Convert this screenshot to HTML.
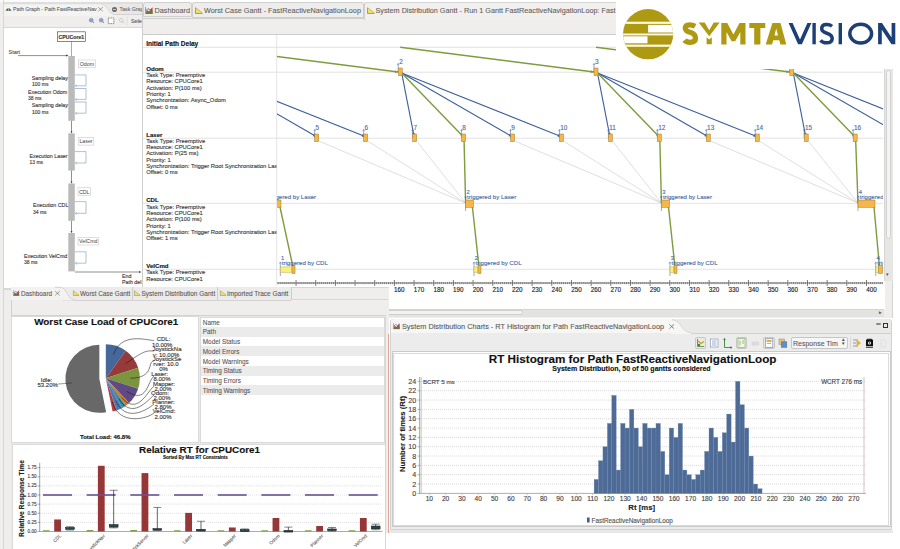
<!DOCTYPE html><html><head><meta charset="utf-8"><style>
html,body{margin:0;padding:0;width:900px;height:549px;overflow:hidden;background:#fff;font-family:"Liberation Sans", sans-serif;}
.a{position:absolute;}
.t{position:absolute;white-space:nowrap;line-height:1;-webkit-text-stroke:0.08px currentColor;}
text{paint-order:stroke;}
svg{position:absolute;overflow:visible;}
</style></head><body>
<div class="a" style="left:0;top:0;width:143px;height:292px;background:#efeeec"></div><div class="a" style="left:0;top:0;width:143px;height:1.5px;background:#fafafa"></div><div class="a" style="left:3px;top:1.5px;width:140px;height:2.5px;background:#dedede"></div><div class="a" style="left:2.5px;top:0;width:1.5px;height:292px;background:#d6d6d6"></div><div class="a" style="left:4px;top:4px;width:139px;height:9.8px;background:#e9e8e6;border-bottom:0.8px solid #d2d2d2"></div><svg style="left:4px;top:3.5px" width="112" height="12"><path d="M0 0.5 H97.5 Q100.5 0.5 103 4 L106.5 9 Q108.5 10.8 112 10.8 V12 H0Z" fill="#f4f3f1"/><path d="M97.5 0.5 Q100.5 0.5 103 4 L106.5 9 Q108.5 10.8 112 10.8" fill="none" stroke="#d2d2d2" stroke-width="0.7"/></svg><svg style="left:5px;top:7.3px" width="7" height="4"><path d="M0.5 3.7 Q3.5 -1.5 6.5 3.7 Z" fill="#555"/><path d="M3.5 0.8 V3.7" stroke="#ddd" stroke-width="0.6"/></svg><div class="t" style="left:13px;top:7.2px;font-size:5.25px;color:#5a5a5a">Path Graph - Path FastReactiveNav</div><svg style="left:98px;top:7.4px" width="5" height="4.5"><path d="M0.5 0.5 L4.5 4 M4.5 0.5 L0.5 4" stroke="#555" stroke-width="0.9" stroke-dasharray="1 0.5"/></svg><div class="a" style="left:112px;top:6.6px;width:5.4px;height:5px;border-radius:50%;background:#666"></div><div class="a" style="left:113.2px;top:8.8px;width:3px;height:0.6px;background:#ccc"></div><div class="t" style="left:119.5px;top:7.2px;font-size:5.25px;color:#666">Task Grap</div><svg style="left:0;top:0" width="143" height="27"><circle cx="91.2" cy="20.2" r="1.9" fill="#8aa8d8" stroke="#7a8a9a" stroke-width="0.6"/><path d="M92.6 21.6 L94 23" stroke="#666" stroke-width="0.8"/><circle cx="101.2" cy="20.2" r="1.9" fill="#8aa8d8" stroke="#7a8a9a" stroke-width="0.6"/><path d="M102.6 21.6 L104 23" stroke="#666" stroke-width="0.8"/><rect x="108.3" y="18" width="5.6" height="5.6" fill="#fff" stroke="#777" stroke-width="0.9" stroke-dasharray="1.4 0.8"/><circle cx="121.2" cy="20.2" r="1.8" fill="none" stroke="#bbb" stroke-width="0.6"/><path d="M122.5 21.5 L123.8 22.8" stroke="#999" stroke-width="0.7"/><line x1="127.2" y1="16.5" x2="127.2" y2="25.5" stroke="#d6d6d6" stroke-width="0.6"/></svg><div class="t" style="left:131px;top:19px;font-size:5.25px;color:#555">Selec</div><div class="a" style="left:4px;top:27px;width:139px;height:260px;background:#fff;border-top:1px solid #d8d8d8"></div><div class="a" style="left:4px;top:288px;width:139px;height:1.5px;background:#d8d8d8"></div><div class="a" style="left:142.5px;top:27px;width:0.8px;height:262px;background:#cfcfcf"></div><svg style="left:0;top:0" width="143" height="290" viewBox="0 0 143 290"><rect x="57.5" y="31.8" width="27.8" height="9.6" fill="#fff" stroke="#555" stroke-width="0.7"/><line x1="71.5" y1="41.4" x2="71.5" y2="56" stroke="#555" stroke-width="0.5"/><line x1="18" y1="55.6" x2="67.5" y2="55.6" stroke="#444" stroke-width="0.6"/><path d="M66 54.6 L68.5 55.6 L66 56.6Z" fill="#444"/><rect x="68.3" y="56" width="6.5" height="64.8" fill="#bababa"/><rect x="68.3" y="133.3" width="6.5" height="37.29999999999998" fill="#bababa"/><rect x="68.3" y="183.5" width="6.5" height="37.30000000000001" fill="#bababa"/><rect x="68.3" y="233" width="6.5" height="38.39999999999998" fill="#bababa"/><line x1="71.5" y1="120.8" x2="71.5" y2="132.8" stroke="#444" stroke-width="0.6"/><path d="M70.5 131.3 L71.5 133.3 L72.5 131.3Z" fill="#444"/><line x1="71.5" y1="170.6" x2="71.5" y2="183.0" stroke="#444" stroke-width="0.6"/><path d="M70.5 181.5 L71.5 183.5 L72.5 181.5Z" fill="#444"/><line x1="71.5" y1="220.8" x2="71.5" y2="232.5" stroke="#444" stroke-width="0.6"/><path d="M70.5 231 L71.5 233 L72.5 231Z" fill="#444"/><rect x="78.3" y="60" width="17.3" height="7.6" fill="#fff" stroke="#c8c8c8" stroke-width="0.6"/><text x="86.95" y="65.8" font-size="5.3" fill="#444" text-anchor="middle" font-family="Liberation Sans">Odom</text><rect x="78.2" y="137.5" width="15.6" height="7.6" fill="#fff" stroke="#c8c8c8" stroke-width="0.6"/><text x="86.0" y="143.3" font-size="5.3" fill="#444" text-anchor="middle" font-family="Liberation Sans">Laser</text><rect x="78" y="187.7" width="12.5" height="7.6" fill="#fff" stroke="#c8c8c8" stroke-width="0.6"/><text x="84.25" y="193.5" font-size="5.3" fill="#444" text-anchor="middle" font-family="Liberation Sans">CDL</text><rect x="78" y="237.4" width="20.5" height="7.6" fill="#fff" stroke="#c8c8c8" stroke-width="0.6"/><text x="88.25" y="243.20000000000002" font-size="5.3" fill="#444" text-anchor="middle" font-family="Liberation Sans">VelCmd</text><path d="M75 74.9 H86 V85.8 H75.5" fill="none" stroke="#7a96c4" stroke-width="0.6"/><path d="M77 84.6 L75.3 85.8 L77 87.0" fill="none" stroke="#7a96c4" stroke-width="0.5"/><path d="M75 88.5 H86 V99.4 H75.5" fill="none" stroke="#7a96c4" stroke-width="0.6"/><path d="M77 98.2 L75.3 99.4 L77 100.60000000000001" fill="none" stroke="#7a96c4" stroke-width="0.5"/><path d="M75 102 H86 V113.2 H75.5" fill="none" stroke="#7a96c4" stroke-width="0.6"/><path d="M77 112.0 L75.3 113.2 L77 114.4" fill="none" stroke="#7a96c4" stroke-width="0.5"/><path d="M75 151.6 H86 V163 H75.5" fill="none" stroke="#7a96c4" stroke-width="0.6"/><path d="M77 161.8 L75.3 163 L77 164.2" fill="none" stroke="#7a96c4" stroke-width="0.5"/><path d="M75 201.6 H86 V213.3 H75.5" fill="none" stroke="#7a96c4" stroke-width="0.6"/><path d="M77 212.10000000000002 L75.3 213.3 L77 214.5" fill="none" stroke="#7a96c4" stroke-width="0.5"/><path d="M75 251.8 H86 V263.2 H75.5" fill="none" stroke="#7a96c4" stroke-width="0.6"/><path d="M77 262.0 L75.3 263.2 L77 264.4" fill="none" stroke="#7a96c4" stroke-width="0.5"/><text x="71.4" y="38.6" font-size="5.2" fill="#333" stroke="#333" stroke-width="0.13" text-anchor="middle" font-weight="bold" font-family="Liberation Sans">CPUCore1</text><text x="8.5" y="54" font-size="5.5" fill="#555" stroke="#555" stroke-width="0.13" text-anchor="start" font-weight="normal" font-family="Liberation Sans">Start</text><text x="31.7" y="80" font-size="5.3" fill="#3a3a3a" stroke="#3a3a3a" stroke-width="0.13" text-anchor="start" font-weight="normal" font-family="Liberation Sans">Sampling delay</text><text x="32" y="86" font-size="5" fill="#3a3a3a" stroke="#3a3a3a" stroke-width="0.13" text-anchor="start" font-weight="normal" font-family="Liberation Sans">100 ms</text><text x="28" y="93.5" font-size="5.3" fill="#3a3a3a" stroke="#3a3a3a" stroke-width="0.13" text-anchor="start" font-weight="normal" font-family="Liberation Sans">Execution Odom</text><text x="28" y="99.8" font-size="5" fill="#3a3a3a" stroke="#3a3a3a" stroke-width="0.13" text-anchor="start" font-weight="normal" font-family="Liberation Sans">38 ms</text><text x="31.7" y="107" font-size="5.3" fill="#3a3a3a" stroke="#3a3a3a" stroke-width="0.13" text-anchor="start" font-weight="normal" font-family="Liberation Sans">Sampling delay</text><text x="32" y="113.5" font-size="5" fill="#3a3a3a" stroke="#3a3a3a" stroke-width="0.13" text-anchor="start" font-weight="normal" font-family="Liberation Sans">100 ms</text><text x="29.5" y="157.5" font-size="5.3" fill="#3a3a3a" stroke="#3a3a3a" stroke-width="0.13" text-anchor="start" font-weight="normal" font-family="Liberation Sans">Execution Laser</text><text x="29.5" y="163.5" font-size="5" fill="#3a3a3a" stroke="#3a3a3a" stroke-width="0.13" text-anchor="start" font-weight="normal" font-family="Liberation Sans">13 ms</text><text x="33" y="207" font-size="5.3" fill="#3a3a3a" stroke="#3a3a3a" stroke-width="0.13" text-anchor="start" font-weight="normal" font-family="Liberation Sans">Execution CDL</text><text x="33" y="213.5" font-size="5" fill="#3a3a3a" stroke="#3a3a3a" stroke-width="0.13" text-anchor="start" font-weight="normal" font-family="Liberation Sans">34 ms</text><text x="24" y="257.5" font-size="5.3" fill="#3a3a3a" stroke="#3a3a3a" stroke-width="0.13" text-anchor="start" font-weight="normal" font-family="Liberation Sans">Execution VelCmd</text><text x="24" y="263.5" font-size="5" fill="#3a3a3a" stroke="#3a3a3a" stroke-width="0.13" text-anchor="start" font-weight="normal" font-family="Liberation Sans">38 ms</text><line x1="75" y1="272" x2="140" y2="272" stroke="#444" stroke-width="0.6"/><path d="M139 271 L141.5 272 L139 273Z" fill="#444"/><text x="122" y="277.6" font-size="5.3" fill="#3a3a3a" stroke="#3a3a3a" stroke-width="0.13" text-anchor="start" font-weight="normal" font-family="Liberation Sans">End</text><text x="122" y="283.8" font-size="5.3" fill="#3a3a3a" stroke="#3a3a3a" stroke-width="0.13" text-anchor="start" font-weight="normal" font-family="Liberation Sans">Path del</text></svg><div class="a" style="left:142px;top:2px;width:751px;height:316px;background:#efeeec;border-radius:4px 0 0 0"></div><div class="a" style="left:142px;top:2px;width:0.8px;height:316px;background:#cfcfcf"></div><div class="a" style="left:892px;top:68px;width:0.8px;height:250px;background:#d4d4d4"></div><div class="a" style="left:143px;top:2.4px;width:49px;height:15px;background:#eeedeb;border:0.8px solid #cfcfcf;border-radius:3px 3px 0 0;box-sizing:border-box"></div><div class="a" style="left:192.4px;top:2.4px;width:172px;height:15.6px;background:#eeedeb;border:0.8px solid #cfcfcf;border-radius:3px 3px 0 0;box-sizing:border-box"></div><div class="a" style="left:364px;top:2.4px;width:260px;height:16.6px;background:#f1f0ee;border-left:0.8px solid #cfcfcf;border-top:0.8px solid #d6d6d6;border-radius:3px 0 0 0"></div><div class="a" style="left:143px;top:17.8px;width:221px;height:0.8px;background:#cfcfcf"></div><svg style="left:145px;top:7px" width="8" height="7" viewBox="0 0 8 7"><path d="M0.5 6.5 L2 3 L4 4.5 L7.5 0.5 V6.5Z" fill="#d33"/><path d="M0.5 6.5 L2.5 4.5 L4.5 5.5 L7.5 3 V6.5Z" fill="#4a8a3a"/><path d="M0.5 4 L3 1.5 L5 3 L7.5 1" stroke="#3a5fb0" stroke-width="0.8" fill="none"/><path d="M0.5 0 V6.5 H8" stroke="#555" stroke-width="0.5" fill="none"/></svg><div class="t" style="left:154.5px;top:7.2px;font-size:7.26px;color:#5c5c5c">Dashboard</div><svg style="left:195px;top:6.5px" width="8" height="7" viewBox="0 0 8 7"><path d="M0.5 0.5 V6.5 H7.5" stroke="#777" stroke-width="0.7" fill="none"/><path d="M1 1 L7.5 6 H1Z" fill="#e8e070"/><path d="M1 1 L7.5 6" stroke="#c8a030" stroke-width="0.7"/></svg><div class="t" style="left:204px;top:7.2px;font-size:7.28px;color:#5c5c5c">Worst Case Gantt - FastReactiveNavigationLoop</div><svg style="left:366.5px;top:6.5px" width="8" height="7" viewBox="0 0 8 7"><path d="M0.5 0.5 V6.5 H7.5" stroke="#777" stroke-width="0.7" fill="none"/><path d="M1 1 L7.5 6 H1Z" fill="#e8e070"/><path d="M1 1 L7.5 6" stroke="#c8a030" stroke-width="0.7"/></svg><div class="t" style="left:375.5px;top:7.2px;font-size:7.24px;color:#5c5c5c">System Distribution Gantt - Run 1 Gantt FastReactiveNavigationLoop: Fast</div><div class="a" style="left:143px;top:34.4px;width:742px;height:275px;background:#fff;border-top:0.8px solid #cdcdcd"></div><svg style="left:0;top:0" width="900" height="320" viewBox="0 0 900 320"><defs><clipPath id="gc"><rect x="277" y="35" width="606" height="252"/></clipPath><clipPath id="tc"><rect x="143" y="35" width="133.5" height="252"/></clipPath></defs><line x1="143" y1="47.3" x2="883" y2="47.3" stroke="#dcdcdc" stroke-width="0.8"/><line x1="143" y1="72.2" x2="883" y2="72.2" stroke="#dcdcdc" stroke-width="0.8"/><line x1="143" y1="138.2" x2="883" y2="138.2" stroke="#dcdcdc" stroke-width="0.8"/><line x1="143" y1="203.4" x2="883" y2="203.4" stroke="#dcdcdc" stroke-width="0.8"/><line x1="143" y1="269.3" x2="883" y2="269.3" stroke="#dcdcdc" stroke-width="0.8"/><line x1="276.7" y1="35" x2="276.7" y2="286" stroke="#dcdcdc" stroke-width="0.8"/><g clip-path="url(#tc)"><text x="146.2" y="46" font-size="6.5" fill="#111" stroke="#111" stroke-width="0.13" font-weight="bold" text-anchor="start" font-family="Liberation Sans" >Initial Path Delay</text><text x="146.2" y="70.8" font-size="6.1" fill="#111" stroke="#111" stroke-width="0.13" font-weight="bold" text-anchor="start" font-family="Liberation Sans" >Odom</text><text x="146.2" y="77.1" font-size="5.85" fill="#3a3a3a" stroke="#3a3a3a" stroke-width="0.13" font-weight="normal" text-anchor="start" font-family="Liberation Sans" >Task Type: Preemptive</text><text x="146.2" y="83.39999999999999" font-size="5.85" fill="#3a3a3a" stroke="#3a3a3a" stroke-width="0.13" font-weight="normal" text-anchor="start" font-family="Liberation Sans" >Resource: CPUCore1</text><text x="146.2" y="89.69999999999999" font-size="5.85" fill="#3a3a3a" stroke="#3a3a3a" stroke-width="0.13" font-weight="normal" text-anchor="start" font-family="Liberation Sans" >Activation: P(100 ms)</text><text x="146.2" y="96.0" font-size="5.85" fill="#3a3a3a" stroke="#3a3a3a" stroke-width="0.13" font-weight="normal" text-anchor="start" font-family="Liberation Sans" >Priority: 1</text><text x="146.2" y="102.3" font-size="5.85" fill="#3a3a3a" stroke="#3a3a3a" stroke-width="0.13" font-weight="normal" text-anchor="start" font-family="Liberation Sans" >Synchronization: Async_Odom</text><text x="146.2" y="108.6" font-size="5.85" fill="#3a3a3a" stroke="#3a3a3a" stroke-width="0.13" font-weight="normal" text-anchor="start" font-family="Liberation Sans" >Offset: 0 ms</text><text x="146.2" y="136.6" font-size="6.1" fill="#111" stroke="#111" stroke-width="0.13" font-weight="bold" text-anchor="start" font-family="Liberation Sans" >Laser</text><text x="146.2" y="142.7" font-size="5.85" fill="#3a3a3a" stroke="#3a3a3a" stroke-width="0.13" font-weight="normal" text-anchor="start" font-family="Liberation Sans" >Task Type: Preemptive</text><text x="146.2" y="149.0" font-size="5.85" fill="#3a3a3a" stroke="#3a3a3a" stroke-width="0.13" font-weight="normal" text-anchor="start" font-family="Liberation Sans" >Resource: CPUCore1</text><text x="146.2" y="155.29999999999998" font-size="5.85" fill="#3a3a3a" stroke="#3a3a3a" stroke-width="0.13" font-weight="normal" text-anchor="start" font-family="Liberation Sans" >Activation: P(25 ms)</text><text x="146.2" y="161.6" font-size="5.85" fill="#3a3a3a" stroke="#3a3a3a" stroke-width="0.13" font-weight="normal" text-anchor="start" font-family="Liberation Sans" >Priority: 1</text><text x="146.2" y="167.89999999999998" font-size="5.85" fill="#3a3a3a" stroke="#3a3a3a" stroke-width="0.13" font-weight="normal" text-anchor="start" font-family="Liberation Sans" >Synchronization: Trigger Root Synchronization Laser</text><text x="146.2" y="174.2" font-size="5.85" fill="#3a3a3a" stroke="#3a3a3a" stroke-width="0.13" font-weight="normal" text-anchor="start" font-family="Liberation Sans" >Offset: 0 ms</text><text x="146.2" y="202" font-size="6.1" fill="#111" stroke="#111" stroke-width="0.13" font-weight="bold" text-anchor="start" font-family="Liberation Sans" >CDL</text><text x="146.2" y="208.8" font-size="5.85" fill="#3a3a3a" stroke="#3a3a3a" stroke-width="0.13" font-weight="normal" text-anchor="start" font-family="Liberation Sans" >Task Type: Preemptive</text><text x="146.2" y="215.10000000000002" font-size="5.85" fill="#3a3a3a" stroke="#3a3a3a" stroke-width="0.13" font-weight="normal" text-anchor="start" font-family="Liberation Sans" >Resource: CPUCore1</text><text x="146.2" y="221.4" font-size="5.85" fill="#3a3a3a" stroke="#3a3a3a" stroke-width="0.13" font-weight="normal" text-anchor="start" font-family="Liberation Sans" >Activation: P(100 ms)</text><text x="146.2" y="227.70000000000002" font-size="5.85" fill="#3a3a3a" stroke="#3a3a3a" stroke-width="0.13" font-weight="normal" text-anchor="start" font-family="Liberation Sans" >Priority: 1</text><text x="146.2" y="234.0" font-size="5.85" fill="#3a3a3a" stroke="#3a3a3a" stroke-width="0.13" font-weight="normal" text-anchor="start" font-family="Liberation Sans" >Synchronization: Trigger Root Synchronization Laser</text><text x="146.2" y="240.3" font-size="5.85" fill="#3a3a3a" stroke="#3a3a3a" stroke-width="0.13" font-weight="normal" text-anchor="start" font-family="Liberation Sans" >Offset: 1 ms</text><text x="146.2" y="268" font-size="6.1" fill="#111" stroke="#111" stroke-width="0.13" font-weight="bold" text-anchor="start" font-family="Liberation Sans" >VelCmd</text><text x="146.2" y="274.4" font-size="5.85" fill="#3a3a3a" stroke="#3a3a3a" stroke-width="0.13" font-weight="normal" text-anchor="start" font-family="Liberation Sans" >Task Type: Preemptive</text><text x="146.2" y="280.7" font-size="5.85" fill="#3a3a3a" stroke="#3a3a3a" stroke-width="0.13" font-weight="normal" text-anchor="start" font-family="Liberation Sans" >Resource: CPUCore1</text><text x="146.2" y="291.3" font-size="5.85" fill="#c33" stroke="#c33" stroke-width="0.13" font-weight="normal" text-anchor="start" font-family="Liberation Sans" >Activation: P(100 ms)</text></g><g clip-path="url(#gc)"><line x1="318.7" y1="141" x2="465.6" y2="203" stroke="#c4c4c4" stroke-width="0.55"/><line x1="367.65" y1="141" x2="465.6" y2="203" stroke="#c4c4c4" stroke-width="0.55"/><line x1="416.6" y1="141" x2="465.6" y2="203" stroke="#c4c4c4" stroke-width="0.55"/><line x1="514.5" y1="141" x2="661.4" y2="203" stroke="#c4c4c4" stroke-width="0.55"/><line x1="563.45" y1="141" x2="661.4" y2="203" stroke="#c4c4c4" stroke-width="0.55"/><line x1="612.4000000000001" y1="141" x2="661.4" y2="203" stroke="#c4c4c4" stroke-width="0.55"/><line x1="710.3" y1="141" x2="858" y2="203" stroke="#c4c4c4" stroke-width="0.55"/><line x1="759.25" y1="141" x2="858" y2="203" stroke="#c4c4c4" stroke-width="0.55"/><line x1="808.2" y1="141" x2="858" y2="203" stroke="#c4c4c4" stroke-width="0.55"/><line x1="8.599999999999994" y1="47.3" x2="202.4" y2="72" stroke="#7d9c3c" stroke-width="1.4"/><path d="M202.4 72 L199.04362087251133 73.02387457852923 L199.4077343244503 70.16698441716197Z" fill="#7d9c3c"/><line x1="204.39999999999998" y1="47.3" x2="398.2" y2="72" stroke="#7d9c3c" stroke-width="1.4"/><path d="M398.2 72 L394.84362087251134 73.02387457852923 L395.20773432445026 70.16698441716197Z" fill="#7d9c3c"/><line x1="400.2" y1="47.3" x2="594" y2="72" stroke="#7d9c3c" stroke-width="1.4"/><path d="M594 72 L590.6436208725114 73.02387457852923 L591.0077343244503 70.16698441716197Z" fill="#7d9c3c"/><line x1="596.0" y1="47.3" x2="789.8" y2="72" stroke="#7d9c3c" stroke-width="1.4"/><path d="M789.8 72 L786.4436208725114 73.02387457852923 L786.8077343244503 70.16698441716197Z" fill="#7d9c3c"/><line x1="205.9" y1="73" x2="218.29999999999998" y2="136.5" stroke="#3d5f99" stroke-width="1.15"/><path d="M218.29999999999998 136.5 L216.2733963998549 133.6353049293373 L219.1000076444746 133.08333674928562Z" fill="#3d5f99"/><line x1="205.9" y1="73" x2="316.2" y2="136.5" stroke="#3d5f99" stroke-width="1.15"/><path d="M316.2 136.5 L312.7082849482461 136.15139420923444 L314.1451995492019 133.655462233086Z" fill="#3d5f99"/><line x1="205.9" y1="73" x2="365.15" y2="136.5" stroke="#3d5f99" stroke-width="1.15"/><path d="M365.15 136.5 L361.64423497743775 136.65235355781533 L362.71094319540356 133.97718373559394Z" fill="#3d5f99"/><line x1="205.9" y1="73" x2="267.75" y2="137" stroke="#7d9c3c" stroke-width="1.4"/><path d="M267.75 137 L264.4907610787831 135.6996301855145 L266.56171708388064 133.6982453587132Z" fill="#7d9c3c"/><line x1="401.7" y1="73" x2="414.1" y2="136.5" stroke="#3d5f99" stroke-width="1.15"/><path d="M414.1 136.5 L412.0733963998549 133.63530492933734 L414.9000076444746 133.0833367492856Z" fill="#3d5f99"/><line x1="401.7" y1="73" x2="512.0" y2="136.5" stroke="#3d5f99" stroke-width="1.15"/><path d="M512.0 136.5 L508.5082849482461 136.15139420923444 L509.9451995492019 133.655462233086Z" fill="#3d5f99"/><line x1="401.7" y1="73" x2="560.95" y2="136.5" stroke="#3d5f99" stroke-width="1.15"/><path d="M560.95 136.5 L557.4442349774378 136.65235355781533 L558.5109431954037 133.97718373559394Z" fill="#3d5f99"/><line x1="401.7" y1="73" x2="463.55" y2="137" stroke="#7d9c3c" stroke-width="1.4"/><path d="M463.55 137 L460.29076107878313 135.6996301855145 L462.36171708388065 133.6982453587132Z" fill="#7d9c3c"/><line x1="597.5" y1="73" x2="609.9000000000001" y2="136.5" stroke="#3d5f99" stroke-width="1.15"/><path d="M609.9000000000001 136.5 L607.873396399855 133.63530492933734 L610.7000076444747 133.0833367492856Z" fill="#3d5f99"/><line x1="597.5" y1="73" x2="707.8" y2="136.5" stroke="#3d5f99" stroke-width="1.15"/><path d="M707.8 136.5 L704.3082849482461 136.15139420923444 L705.7451995492019 133.655462233086Z" fill="#3d5f99"/><line x1="597.5" y1="73" x2="756.75" y2="136.5" stroke="#3d5f99" stroke-width="1.15"/><path d="M756.75 136.5 L753.2442349774377 136.65235355781533 L754.3109431954036 133.97718373559394Z" fill="#3d5f99"/><line x1="597.5" y1="73" x2="659.35" y2="137" stroke="#7d9c3c" stroke-width="1.4"/><path d="M659.35 137 L656.0907610787832 135.6996301855145 L658.1617170838807 133.6982453587132Z" fill="#7d9c3c"/><line x1="793.3" y1="73" x2="805.7" y2="136.5" stroke="#3d5f99" stroke-width="1.15"/><path d="M805.7 136.5 L803.6733963998549 133.63530492933734 L806.5000076444746 133.0833367492856Z" fill="#3d5f99"/><line x1="793.3" y1="73" x2="903.6000000000001" y2="136.5" stroke="#3d5f99" stroke-width="1.15"/><path d="M903.6000000000001 136.5 L900.1082849482463 136.15139420923444 L901.545199549202 133.655462233086Z" fill="#3d5f99"/><line x1="793.3" y1="73" x2="952.55" y2="136.5" stroke="#3d5f99" stroke-width="1.15"/><path d="M952.55 136.5 L949.0442349774377 136.65235355781533 L950.1109431954036 133.97718373559394Z" fill="#3d5f99"/><line x1="793.3" y1="73" x2="855.1500000000001" y2="137" stroke="#7d9c3c" stroke-width="1.4"/><path d="M855.1500000000001 137 L851.8907610787833 135.6996301855145 L853.9617170838808 133.6982453587132Z" fill="#7d9c3c"/><line x1="464.05" y1="140" x2="465.6" y2="203" stroke="#7d9c3c" stroke-width="1.4"/><line x1="659.85" y1="140" x2="661.4" y2="203" stroke="#7d9c3c" stroke-width="1.4"/><line x1="855.6500000000001" y1="140" x2="858" y2="203" stroke="#7d9c3c" stroke-width="1.4"/><line x1="280" y1="207" x2="293" y2="267" stroke="#7d9c3c" stroke-width="1.4"/><line x1="472.4" y1="207" x2="479" y2="267" stroke="#7d9c3c" stroke-width="1.4"/><line x1="668.5" y1="207" x2="675" y2="267" stroke="#7d9c3c" stroke-width="1.4"/><line x1="874" y1="207" x2="879.5" y2="267" stroke="#7d9c3c" stroke-width="1.4"/><line x1="202.4" y1="63.5" x2="202.4" y2="72" stroke="#4a70b0" stroke-width="0.6"/><path d="M201.4 65.1 L202.4 63.5 L203.4 65.1" stroke="#4a70b0" stroke-width="0.5" fill="none"/><text x="203.4" y="64" font-size="6.4" fill="#4a6ea8" stroke="#4a6ea8" stroke-width="0.13" font-weight="normal" text-anchor="start" font-family="Liberation Sans" >1</text><rect x="202.4" y="68" width="4" height="7.6" fill="#f6b64a" stroke="#9a7a30" stroke-width="0.5"/><line x1="398.2" y1="63.5" x2="398.2" y2="72" stroke="#4a70b0" stroke-width="0.6"/><path d="M397.2 65.1 L398.2 63.5 L399.2 65.1" stroke="#4a70b0" stroke-width="0.5" fill="none"/><text x="399.2" y="64" font-size="6.4" fill="#4a6ea8" stroke="#4a6ea8" stroke-width="0.13" font-weight="normal" text-anchor="start" font-family="Liberation Sans" >2</text><rect x="398.2" y="68" width="4" height="7.6" fill="#f6b64a" stroke="#9a7a30" stroke-width="0.5"/><line x1="594" y1="63.5" x2="594" y2="72" stroke="#4a70b0" stroke-width="0.6"/><path d="M593 65.1 L594 63.5 L595 65.1" stroke="#4a70b0" stroke-width="0.5" fill="none"/><text x="595.0" y="64" font-size="6.4" fill="#4a6ea8" stroke="#4a6ea8" stroke-width="0.13" font-weight="normal" text-anchor="start" font-family="Liberation Sans" >3</text><rect x="594" y="68" width="4" height="7.6" fill="#f6b64a" stroke="#9a7a30" stroke-width="0.5"/><line x1="789.8" y1="63.5" x2="789.8" y2="72" stroke="#4a70b0" stroke-width="0.6"/><path d="M788.8 65.1 L789.8 63.5 L790.8 65.1" stroke="#4a70b0" stroke-width="0.5" fill="none"/><text x="790.8" y="64" font-size="6.4" fill="#4a6ea8" stroke="#4a6ea8" stroke-width="0.13" font-weight="normal" text-anchor="start" font-family="Liberation Sans" >4</text><rect x="789.8" y="68" width="4" height="7.6" fill="#f6b64a" stroke="#9a7a30" stroke-width="0.5"/><line x1="314.7" y1="129.5" x2="314.7" y2="138" stroke="#4a70b0" stroke-width="0.6"/><path d="M313.7 131.1 L314.7 129.5 L315.7 131.1" stroke="#4a70b0" stroke-width="0.5" fill="none"/><text x="315.5" y="130" font-size="6.4" fill="#4a6ea8" stroke="#4a6ea8" stroke-width="0.13" font-weight="normal" text-anchor="start" font-family="Liberation Sans" >5</text><rect x="314.7" y="134" width="4" height="7.6" fill="#f6b64a" stroke="#9a7a30" stroke-width="0.5"/><line x1="363.65" y1="129.5" x2="363.65" y2="138" stroke="#4a70b0" stroke-width="0.6"/><path d="M362.65 131.1 L363.65 129.5 L364.65 131.1" stroke="#4a70b0" stroke-width="0.5" fill="none"/><text x="364.45" y="130" font-size="6.4" fill="#4a6ea8" stroke="#4a6ea8" stroke-width="0.13" font-weight="normal" text-anchor="start" font-family="Liberation Sans" >6</text><rect x="363.65" y="134" width="4" height="7.6" fill="#f6b64a" stroke="#9a7a30" stroke-width="0.5"/><line x1="412.6" y1="129.5" x2="412.6" y2="138" stroke="#4a70b0" stroke-width="0.6"/><path d="M411.6 131.1 L412.6 129.5 L413.6 131.1" stroke="#4a70b0" stroke-width="0.5" fill="none"/><text x="413.40000000000003" y="130" font-size="6.4" fill="#4a6ea8" stroke="#4a6ea8" stroke-width="0.13" font-weight="normal" text-anchor="start" font-family="Liberation Sans" >7</text><rect x="412.6" y="134" width="4" height="7.6" fill="#f6b64a" stroke="#9a7a30" stroke-width="0.5"/><line x1="461.55" y1="129.5" x2="461.55" y2="138" stroke="#4a70b0" stroke-width="0.6"/><path d="M460.55 131.1 L461.55 129.5 L462.55 131.1" stroke="#4a70b0" stroke-width="0.5" fill="none"/><text x="462.35" y="130" font-size="6.4" fill="#4a6ea8" stroke="#4a6ea8" stroke-width="0.13" font-weight="normal" text-anchor="start" font-family="Liberation Sans" >8</text><rect x="461.55" y="134" width="4" height="7.6" fill="#f6b64a" stroke="#9a7a30" stroke-width="0.5"/><line x1="510.5" y1="129.5" x2="510.5" y2="138" stroke="#4a70b0" stroke-width="0.6"/><path d="M509.5 131.1 L510.5 129.5 L511.5 131.1" stroke="#4a70b0" stroke-width="0.5" fill="none"/><text x="511.29999999999995" y="130" font-size="6.4" fill="#4a6ea8" stroke="#4a6ea8" stroke-width="0.13" font-weight="normal" text-anchor="start" font-family="Liberation Sans" >9</text><rect x="510.5" y="134" width="4" height="7.6" fill="#f6b64a" stroke="#9a7a30" stroke-width="0.5"/><line x1="559.45" y1="129.5" x2="559.45" y2="138" stroke="#4a70b0" stroke-width="0.6"/><path d="M558.45 131.1 L559.45 129.5 L560.45 131.1" stroke="#4a70b0" stroke-width="0.5" fill="none"/><text x="560.25" y="130" font-size="6.4" fill="#4a6ea8" stroke="#4a6ea8" stroke-width="0.13" font-weight="normal" text-anchor="start" font-family="Liberation Sans" >10</text><rect x="559.45" y="134" width="4" height="7.6" fill="#f6b64a" stroke="#9a7a30" stroke-width="0.5"/><line x1="608.4000000000001" y1="129.5" x2="608.4000000000001" y2="138" stroke="#4a70b0" stroke-width="0.6"/><path d="M607.4000000000001 131.1 L608.4000000000001 129.5 L609.4000000000001 131.1" stroke="#4a70b0" stroke-width="0.5" fill="none"/><text x="609.2" y="130" font-size="6.4" fill="#4a6ea8" stroke="#4a6ea8" stroke-width="0.13" font-weight="normal" text-anchor="start" font-family="Liberation Sans" >11</text><rect x="608.4000000000001" y="134" width="4" height="7.6" fill="#f6b64a" stroke="#9a7a30" stroke-width="0.5"/><line x1="657.35" y1="129.5" x2="657.35" y2="138" stroke="#4a70b0" stroke-width="0.6"/><path d="M656.35 131.1 L657.35 129.5 L658.35 131.1" stroke="#4a70b0" stroke-width="0.5" fill="none"/><text x="658.15" y="130" font-size="6.4" fill="#4a6ea8" stroke="#4a6ea8" stroke-width="0.13" font-weight="normal" text-anchor="start" font-family="Liberation Sans" >12</text><rect x="657.35" y="134" width="4" height="7.6" fill="#f6b64a" stroke="#9a7a30" stroke-width="0.5"/><line x1="706.3" y1="129.5" x2="706.3" y2="138" stroke="#4a70b0" stroke-width="0.6"/><path d="M705.3 131.1 L706.3 129.5 L707.3 131.1" stroke="#4a70b0" stroke-width="0.5" fill="none"/><text x="707.0999999999999" y="130" font-size="6.4" fill="#4a6ea8" stroke="#4a6ea8" stroke-width="0.13" font-weight="normal" text-anchor="start" font-family="Liberation Sans" >13</text><rect x="706.3" y="134" width="4" height="7.6" fill="#f6b64a" stroke="#9a7a30" stroke-width="0.5"/><line x1="755.25" y1="129.5" x2="755.25" y2="138" stroke="#4a70b0" stroke-width="0.6"/><path d="M754.25 131.1 L755.25 129.5 L756.25 131.1" stroke="#4a70b0" stroke-width="0.5" fill="none"/><text x="756.05" y="130" font-size="6.4" fill="#4a6ea8" stroke="#4a6ea8" stroke-width="0.13" font-weight="normal" text-anchor="start" font-family="Liberation Sans" >14</text><rect x="755.25" y="134" width="4" height="7.6" fill="#f6b64a" stroke="#9a7a30" stroke-width="0.5"/><line x1="804.2" y1="129.5" x2="804.2" y2="138" stroke="#4a70b0" stroke-width="0.6"/><path d="M803.2 131.1 L804.2 129.5 L805.2 131.1" stroke="#4a70b0" stroke-width="0.5" fill="none"/><text x="805.0" y="130" font-size="6.4" fill="#4a6ea8" stroke="#4a6ea8" stroke-width="0.13" font-weight="normal" text-anchor="start" font-family="Liberation Sans" >15</text><rect x="804.2" y="134" width="4" height="7.6" fill="#f6b64a" stroke="#9a7a30" stroke-width="0.5"/><line x1="853.1500000000001" y1="129.5" x2="853.1500000000001" y2="138" stroke="#4a70b0" stroke-width="0.6"/><path d="M852.1500000000001 131.1 L853.1500000000001 129.5 L854.1500000000001 131.1" stroke="#4a70b0" stroke-width="0.5" fill="none"/><text x="853.95" y="130" font-size="6.4" fill="#4a6ea8" stroke="#4a6ea8" stroke-width="0.13" font-weight="normal" text-anchor="start" font-family="Liberation Sans" >16</text><rect x="853.1500000000001" y="134" width="4" height="7.6" fill="#f6b64a" stroke="#9a7a30" stroke-width="0.5"/><line x1="902.1000000000001" y1="129.5" x2="902.1000000000001" y2="138" stroke="#4a70b0" stroke-width="0.6"/><path d="M901.1000000000001 131.1 L902.1000000000001 129.5 L903.1000000000001 131.1" stroke="#4a70b0" stroke-width="0.5" fill="none"/><text x="902.9000000000001" y="130" font-size="6.4" fill="#4a6ea8" stroke="#4a6ea8" stroke-width="0.13" font-weight="normal" text-anchor="start" font-family="Liberation Sans" >17</text><rect x="902.1000000000001" y="134" width="4" height="7.6" fill="#f6b64a" stroke="#9a7a30" stroke-width="0.5"/><line x1="951.05" y1="129.5" x2="951.05" y2="138" stroke="#4a70b0" stroke-width="0.6"/><path d="M950.05 131.1 L951.05 129.5 L952.05 131.1" stroke="#4a70b0" stroke-width="0.5" fill="none"/><text x="951.8499999999999" y="130" font-size="6.4" fill="#4a6ea8" stroke="#4a6ea8" stroke-width="0.13" font-weight="normal" text-anchor="start" font-family="Liberation Sans" >18</text><rect x="951.05" y="134" width="4" height="7.6" fill="#f6b64a" stroke="#9a7a30" stroke-width="0.5"/><line x1="262" y1="196" x2="262" y2="211" stroke="#4a70b0" stroke-width="0.6"/><path d="M261 197.6 L262 196 L263 197.6" stroke="#4a70b0" stroke-width="0.5" fill="none"/><rect x="262" y="200" width="19" height="7.3" fill="#f6b64a" stroke="#9a7a30" stroke-width="0.5"/><text x="262.8" y="193.8" font-size="5.8" fill="#4a6ea8" stroke="#4a6ea8" stroke-width="0.13" font-weight="normal" text-anchor="start" font-family="Liberation Sans" >1</text><text x="267" y="199" font-size="6.1" fill="#4a6ea8" stroke="#4a6ea8" stroke-width="0.13" font-weight="normal" text-anchor="start" font-family="Liberation Sans" >triggered by Laser</text><line x1="465.6" y1="196" x2="465.6" y2="211" stroke="#4a70b0" stroke-width="0.6"/><path d="M464.6 197.6 L465.6 196 L466.6 197.6" stroke="#4a70b0" stroke-width="0.5" fill="none"/><rect x="465.6" y="200" width="7.7999999999999545" height="7.3" fill="#f6b64a" stroke="#9a7a30" stroke-width="0.5"/><text x="466.40000000000003" y="193.8" font-size="5.8" fill="#4a6ea8" stroke="#4a6ea8" stroke-width="0.13" font-weight="normal" text-anchor="start" font-family="Liberation Sans" >2</text><text x="467.1" y="199" font-size="6.1" fill="#4a6ea8" stroke="#4a6ea8" stroke-width="0.13" font-weight="normal" text-anchor="start" font-family="Liberation Sans" >triggered by Laser</text><line x1="661.4" y1="196" x2="661.4" y2="211" stroke="#4a70b0" stroke-width="0.6"/><path d="M660.4 197.6 L661.4 196 L662.4 197.6" stroke="#4a70b0" stroke-width="0.5" fill="none"/><rect x="661.4" y="200" width="8.100000000000023" height="7.3" fill="#f6b64a" stroke="#9a7a30" stroke-width="0.5"/><text x="662.1999999999999" y="193.8" font-size="5.8" fill="#4a6ea8" stroke="#4a6ea8" stroke-width="0.13" font-weight="normal" text-anchor="start" font-family="Liberation Sans" >3</text><text x="662.9" y="199" font-size="6.1" fill="#4a6ea8" stroke="#4a6ea8" stroke-width="0.13" font-weight="normal" text-anchor="start" font-family="Liberation Sans" >triggered by Laser</text><line x1="858" y1="196" x2="858" y2="211" stroke="#4a70b0" stroke-width="0.6"/><path d="M857 197.6 L858 196 L859 197.6" stroke="#4a70b0" stroke-width="0.5" fill="none"/><rect x="858" y="200" width="17" height="7.3" fill="#f6b64a" stroke="#9a7a30" stroke-width="0.5"/><text x="858.8" y="193.8" font-size="5.8" fill="#4a6ea8" stroke="#4a6ea8" stroke-width="0.13" font-weight="normal" text-anchor="start" font-family="Liberation Sans" >4</text><text x="859.5" y="199" font-size="6.1" fill="#4a6ea8" stroke="#4a6ea8" stroke-width="0.13" font-weight="normal" text-anchor="start" font-family="Liberation Sans" >triggered by Laser</text><line x1="280.3" y1="262" x2="280.3" y2="276" stroke="#4a70b0" stroke-width="0.6"/><path d="M279.3 263.6 L280.3 262 L281.3 263.6" stroke="#4a70b0" stroke-width="0.5" fill="none"/><rect x="280.3" y="266.9" width="11.699999999999989" height="5.4" fill="#f6f07a" stroke="#b0a040" stroke-width="0.4"/><rect x="292" y="265.6" width="3" height="7.9" fill="#f6b64a" stroke="#9a7a30" stroke-width="0.5"/><text x="281.1" y="259.8" font-size="5.8" fill="#4a6ea8" stroke="#4a6ea8" stroke-width="0.13" font-weight="normal" text-anchor="start" font-family="Liberation Sans" >1</text><text x="281.8" y="265" font-size="6.1" fill="#4a6ea8" stroke="#4a6ea8" stroke-width="0.13" font-weight="normal" text-anchor="start" font-family="Liberation Sans" >triggered by CDL</text><line x1="474" y1="262" x2="474" y2="276" stroke="#4a70b0" stroke-width="0.6"/><path d="M473 263.6 L474 262 L475 263.6" stroke="#4a70b0" stroke-width="0.5" fill="none"/><rect x="474" y="266.9" width="4" height="5.4" fill="#f6f07a" stroke="#b0a040" stroke-width="0.4"/><rect x="478" y="265.6" width="3" height="7.9" fill="#f6b64a" stroke="#9a7a30" stroke-width="0.5"/><text x="474.8" y="259.8" font-size="5.8" fill="#4a6ea8" stroke="#4a6ea8" stroke-width="0.13" font-weight="normal" text-anchor="start" font-family="Liberation Sans" >2</text><text x="475.5" y="265" font-size="6.1" fill="#4a6ea8" stroke="#4a6ea8" stroke-width="0.13" font-weight="normal" text-anchor="start" font-family="Liberation Sans" >triggered by CDL</text><line x1="670" y1="262" x2="670" y2="276" stroke="#4a70b0" stroke-width="0.6"/><path d="M669 263.6 L670 262 L671 263.6" stroke="#4a70b0" stroke-width="0.5" fill="none"/><rect x="670" y="266.9" width="4" height="5.4" fill="#f6f07a" stroke="#b0a040" stroke-width="0.4"/><rect x="674" y="265.6" width="3" height="7.9" fill="#f6b64a" stroke="#9a7a30" stroke-width="0.5"/><text x="670.8" y="259.8" font-size="5.8" fill="#4a6ea8" stroke="#4a6ea8" stroke-width="0.13" font-weight="normal" text-anchor="start" font-family="Liberation Sans" >3</text><text x="671.5" y="265" font-size="6.1" fill="#4a6ea8" stroke="#4a6ea8" stroke-width="0.13" font-weight="normal" text-anchor="start" font-family="Liberation Sans" >triggered by CDL</text><line x1="875.8" y1="262" x2="875.8" y2="276" stroke="#4a70b0" stroke-width="0.6"/><path d="M874.8 263.6 L875.8 262 L876.8 263.6" stroke="#4a70b0" stroke-width="0.5" fill="none"/><rect x="875.8" y="266.9" width="2.7000000000000455" height="5.4" fill="#f6f07a" stroke="#b0a040" stroke-width="0.4"/><rect x="878.5" y="265.6" width="4.100000000000023" height="7.9" fill="#f6b64a" stroke="#9a7a30" stroke-width="0.5"/><text x="876.5999999999999" y="259.8" font-size="5.8" fill="#4a6ea8" stroke="#4a6ea8" stroke-width="0.13" font-weight="normal" text-anchor="start" font-family="Liberation Sans" >4</text><text x="877.3" y="265" font-size="6.1" fill="#4a6ea8" stroke="#4a6ea8" stroke-width="0.13" font-weight="normal" text-anchor="start" font-family="Liberation Sans" >triggered by CDL</text></g><line x1="277" y1="283" x2="883" y2="283" stroke="#333" stroke-width="0.6"/><line x1="278.35" y1="282" x2="278.35" y2="284.2" stroke="#333" stroke-width="0.45"/><line x1="280.31" y1="282" x2="280.31" y2="284.2" stroke="#333" stroke-width="0.45"/><line x1="282.28" y1="282" x2="282.28" y2="284.2" stroke="#333" stroke-width="0.45"/><line x1="284.25" y1="282" x2="284.25" y2="284.2" stroke="#333" stroke-width="0.45"/><line x1="286.21" y1="282" x2="286.21" y2="284.2" stroke="#333" stroke-width="0.45"/><line x1="288.18" y1="282" x2="288.18" y2="284.2" stroke="#333" stroke-width="0.45"/><line x1="290.15" y1="282" x2="290.15" y2="284.2" stroke="#333" stroke-width="0.45"/><line x1="292.12" y1="282" x2="292.12" y2="284.2" stroke="#333" stroke-width="0.45"/><line x1="294.08" y1="282" x2="294.08" y2="284.2" stroke="#333" stroke-width="0.45"/><line x1="296.05" y1="280" x2="296.05" y2="286" stroke="#222" stroke-width="0.6"/><text x="295.74999999999994" y="292.4" font-size="6.3" fill="#222" stroke="#222" stroke-width="0.13" font-weight="normal" text-anchor="start" font-family="Liberation Sans" >110</text><line x1="298.02" y1="282" x2="298.02" y2="284.2" stroke="#333" stroke-width="0.45"/><line x1="299.98" y1="282" x2="299.98" y2="284.2" stroke="#333" stroke-width="0.45"/><line x1="301.95" y1="282" x2="301.95" y2="284.2" stroke="#333" stroke-width="0.45"/><line x1="303.92" y1="282" x2="303.92" y2="284.2" stroke="#333" stroke-width="0.45"/><line x1="305.88" y1="282" x2="305.88" y2="284.2" stroke="#333" stroke-width="0.45"/><line x1="307.85" y1="282" x2="307.85" y2="284.2" stroke="#333" stroke-width="0.45"/><line x1="309.82" y1="282" x2="309.82" y2="284.2" stroke="#333" stroke-width="0.45"/><line x1="311.79" y1="282" x2="311.79" y2="284.2" stroke="#333" stroke-width="0.45"/><line x1="313.75" y1="282" x2="313.75" y2="284.2" stroke="#333" stroke-width="0.45"/><line x1="315.72" y1="280" x2="315.72" y2="286" stroke="#222" stroke-width="0.6"/><text x="315.41999999999996" y="292.4" font-size="6.3" fill="#222" stroke="#222" stroke-width="0.13" font-weight="normal" text-anchor="start" font-family="Liberation Sans" >120</text><line x1="317.69" y1="282" x2="317.69" y2="284.2" stroke="#333" stroke-width="0.45"/><line x1="319.65" y1="282" x2="319.65" y2="284.2" stroke="#333" stroke-width="0.45"/><line x1="321.62" y1="282" x2="321.62" y2="284.2" stroke="#333" stroke-width="0.45"/><line x1="323.59" y1="282" x2="323.59" y2="284.2" stroke="#333" stroke-width="0.45"/><line x1="325.55" y1="282" x2="325.55" y2="284.2" stroke="#333" stroke-width="0.45"/><line x1="327.52" y1="282" x2="327.52" y2="284.2" stroke="#333" stroke-width="0.45"/><line x1="329.49" y1="282" x2="329.49" y2="284.2" stroke="#333" stroke-width="0.45"/><line x1="331.46" y1="282" x2="331.46" y2="284.2" stroke="#333" stroke-width="0.45"/><line x1="333.42" y1="282" x2="333.42" y2="284.2" stroke="#333" stroke-width="0.45"/><line x1="335.39" y1="280" x2="335.39" y2="286" stroke="#222" stroke-width="0.6"/><text x="335.09" y="292.4" font-size="6.3" fill="#222" stroke="#222" stroke-width="0.13" font-weight="normal" text-anchor="start" font-family="Liberation Sans" >130</text><line x1="337.36" y1="282" x2="337.36" y2="284.2" stroke="#333" stroke-width="0.45"/><line x1="339.32" y1="282" x2="339.32" y2="284.2" stroke="#333" stroke-width="0.45"/><line x1="341.29" y1="282" x2="341.29" y2="284.2" stroke="#333" stroke-width="0.45"/><line x1="343.26" y1="282" x2="343.26" y2="284.2" stroke="#333" stroke-width="0.45"/><line x1="345.22" y1="282" x2="345.22" y2="284.2" stroke="#333" stroke-width="0.45"/><line x1="347.19" y1="282" x2="347.19" y2="284.2" stroke="#333" stroke-width="0.45"/><line x1="349.16" y1="282" x2="349.16" y2="284.2" stroke="#333" stroke-width="0.45"/><line x1="351.13" y1="282" x2="351.13" y2="284.2" stroke="#333" stroke-width="0.45"/><line x1="353.09" y1="282" x2="353.09" y2="284.2" stroke="#333" stroke-width="0.45"/><line x1="355.06" y1="280" x2="355.06" y2="286" stroke="#222" stroke-width="0.6"/><text x="354.75999999999993" y="292.4" font-size="6.3" fill="#222" stroke="#222" stroke-width="0.13" font-weight="normal" text-anchor="start" font-family="Liberation Sans" >140</text><line x1="357.03" y1="282" x2="357.03" y2="284.2" stroke="#333" stroke-width="0.45"/><line x1="358.99" y1="282" x2="358.99" y2="284.2" stroke="#333" stroke-width="0.45"/><line x1="360.96" y1="282" x2="360.96" y2="284.2" stroke="#333" stroke-width="0.45"/><line x1="362.93" y1="282" x2="362.93" y2="284.2" stroke="#333" stroke-width="0.45"/><line x1="364.89" y1="282" x2="364.89" y2="284.2" stroke="#333" stroke-width="0.45"/><line x1="366.86" y1="282" x2="366.86" y2="284.2" stroke="#333" stroke-width="0.45"/><line x1="368.83" y1="282" x2="368.83" y2="284.2" stroke="#333" stroke-width="0.45"/><line x1="370.80" y1="282" x2="370.80" y2="284.2" stroke="#333" stroke-width="0.45"/><line x1="372.76" y1="282" x2="372.76" y2="284.2" stroke="#333" stroke-width="0.45"/><line x1="374.73" y1="280" x2="374.73" y2="286" stroke="#222" stroke-width="0.6"/><text x="374.42999999999995" y="292.4" font-size="6.3" fill="#222" stroke="#222" stroke-width="0.13" font-weight="normal" text-anchor="start" font-family="Liberation Sans" >150</text><line x1="376.70" y1="282" x2="376.70" y2="284.2" stroke="#333" stroke-width="0.45"/><line x1="378.66" y1="282" x2="378.66" y2="284.2" stroke="#333" stroke-width="0.45"/><line x1="380.63" y1="282" x2="380.63" y2="284.2" stroke="#333" stroke-width="0.45"/><line x1="382.60" y1="282" x2="382.60" y2="284.2" stroke="#333" stroke-width="0.45"/><line x1="384.56" y1="282" x2="384.56" y2="284.2" stroke="#333" stroke-width="0.45"/><line x1="386.53" y1="282" x2="386.53" y2="284.2" stroke="#333" stroke-width="0.45"/><line x1="388.50" y1="282" x2="388.50" y2="284.2" stroke="#333" stroke-width="0.45"/><line x1="390.47" y1="282" x2="390.47" y2="284.2" stroke="#333" stroke-width="0.45"/><line x1="392.43" y1="282" x2="392.43" y2="284.2" stroke="#333" stroke-width="0.45"/><line x1="394.40" y1="280" x2="394.40" y2="286" stroke="#222" stroke-width="0.6"/><text x="394.09999999999997" y="292.4" font-size="6.3" fill="#222" stroke="#222" stroke-width="0.13" font-weight="normal" text-anchor="start" font-family="Liberation Sans" >160</text><line x1="396.37" y1="282" x2="396.37" y2="284.2" stroke="#333" stroke-width="0.45"/><line x1="398.33" y1="282" x2="398.33" y2="284.2" stroke="#333" stroke-width="0.45"/><line x1="400.30" y1="282" x2="400.30" y2="284.2" stroke="#333" stroke-width="0.45"/><line x1="402.27" y1="282" x2="402.27" y2="284.2" stroke="#333" stroke-width="0.45"/><line x1="404.23" y1="282" x2="404.23" y2="284.2" stroke="#333" stroke-width="0.45"/><line x1="406.20" y1="282" x2="406.20" y2="284.2" stroke="#333" stroke-width="0.45"/><line x1="408.17" y1="282" x2="408.17" y2="284.2" stroke="#333" stroke-width="0.45"/><line x1="410.14" y1="282" x2="410.14" y2="284.2" stroke="#333" stroke-width="0.45"/><line x1="412.10" y1="282" x2="412.10" y2="284.2" stroke="#333" stroke-width="0.45"/><line x1="414.07" y1="280" x2="414.07" y2="286" stroke="#222" stroke-width="0.6"/><text x="413.77" y="292.4" font-size="6.3" fill="#222" stroke="#222" stroke-width="0.13" font-weight="normal" text-anchor="start" font-family="Liberation Sans" >170</text><line x1="416.04" y1="282" x2="416.04" y2="284.2" stroke="#333" stroke-width="0.45"/><line x1="418.00" y1="282" x2="418.00" y2="284.2" stroke="#333" stroke-width="0.45"/><line x1="419.97" y1="282" x2="419.97" y2="284.2" stroke="#333" stroke-width="0.45"/><line x1="421.94" y1="282" x2="421.94" y2="284.2" stroke="#333" stroke-width="0.45"/><line x1="423.90" y1="282" x2="423.90" y2="284.2" stroke="#333" stroke-width="0.45"/><line x1="425.87" y1="282" x2="425.87" y2="284.2" stroke="#333" stroke-width="0.45"/><line x1="427.84" y1="282" x2="427.84" y2="284.2" stroke="#333" stroke-width="0.45"/><line x1="429.81" y1="282" x2="429.81" y2="284.2" stroke="#333" stroke-width="0.45"/><line x1="431.77" y1="282" x2="431.77" y2="284.2" stroke="#333" stroke-width="0.45"/><line x1="433.74" y1="280" x2="433.74" y2="286" stroke="#222" stroke-width="0.6"/><text x="433.44" y="292.4" font-size="6.3" fill="#222" stroke="#222" stroke-width="0.13" font-weight="normal" text-anchor="start" font-family="Liberation Sans" >180</text><line x1="435.71" y1="282" x2="435.71" y2="284.2" stroke="#333" stroke-width="0.45"/><line x1="437.67" y1="282" x2="437.67" y2="284.2" stroke="#333" stroke-width="0.45"/><line x1="439.64" y1="282" x2="439.64" y2="284.2" stroke="#333" stroke-width="0.45"/><line x1="441.61" y1="282" x2="441.61" y2="284.2" stroke="#333" stroke-width="0.45"/><line x1="443.57" y1="282" x2="443.57" y2="284.2" stroke="#333" stroke-width="0.45"/><line x1="445.54" y1="282" x2="445.54" y2="284.2" stroke="#333" stroke-width="0.45"/><line x1="447.51" y1="282" x2="447.51" y2="284.2" stroke="#333" stroke-width="0.45"/><line x1="449.48" y1="282" x2="449.48" y2="284.2" stroke="#333" stroke-width="0.45"/><line x1="451.44" y1="282" x2="451.44" y2="284.2" stroke="#333" stroke-width="0.45"/><line x1="453.41" y1="280" x2="453.41" y2="286" stroke="#222" stroke-width="0.6"/><text x="453.10999999999996" y="292.4" font-size="6.3" fill="#222" stroke="#222" stroke-width="0.13" font-weight="normal" text-anchor="start" font-family="Liberation Sans" >190</text><line x1="455.38" y1="282" x2="455.38" y2="284.2" stroke="#333" stroke-width="0.45"/><line x1="457.34" y1="282" x2="457.34" y2="284.2" stroke="#333" stroke-width="0.45"/><line x1="459.31" y1="282" x2="459.31" y2="284.2" stroke="#333" stroke-width="0.45"/><line x1="461.28" y1="282" x2="461.28" y2="284.2" stroke="#333" stroke-width="0.45"/><line x1="463.25" y1="282" x2="463.25" y2="284.2" stroke="#333" stroke-width="0.45"/><line x1="465.21" y1="282" x2="465.21" y2="284.2" stroke="#333" stroke-width="0.45"/><line x1="467.18" y1="282" x2="467.18" y2="284.2" stroke="#333" stroke-width="0.45"/><line x1="469.15" y1="282" x2="469.15" y2="284.2" stroke="#333" stroke-width="0.45"/><line x1="471.11" y1="282" x2="471.11" y2="284.2" stroke="#333" stroke-width="0.45"/><line x1="473.08" y1="280" x2="473.08" y2="286" stroke="#222" stroke-width="0.6"/><text x="472.78" y="292.4" font-size="6.3" fill="#222" stroke="#222" stroke-width="0.13" font-weight="normal" text-anchor="start" font-family="Liberation Sans" >200</text><line x1="475.05" y1="282" x2="475.05" y2="284.2" stroke="#333" stroke-width="0.45"/><line x1="477.01" y1="282" x2="477.01" y2="284.2" stroke="#333" stroke-width="0.45"/><line x1="478.98" y1="282" x2="478.98" y2="284.2" stroke="#333" stroke-width="0.45"/><line x1="480.95" y1="282" x2="480.95" y2="284.2" stroke="#333" stroke-width="0.45"/><line x1="482.91" y1="282" x2="482.91" y2="284.2" stroke="#333" stroke-width="0.45"/><line x1="484.88" y1="282" x2="484.88" y2="284.2" stroke="#333" stroke-width="0.45"/><line x1="486.85" y1="282" x2="486.85" y2="284.2" stroke="#333" stroke-width="0.45"/><line x1="488.82" y1="282" x2="488.82" y2="284.2" stroke="#333" stroke-width="0.45"/><line x1="490.78" y1="282" x2="490.78" y2="284.2" stroke="#333" stroke-width="0.45"/><line x1="492.75" y1="280" x2="492.75" y2="286" stroke="#222" stroke-width="0.6"/><text x="492.45" y="292.4" font-size="6.3" fill="#222" stroke="#222" stroke-width="0.13" font-weight="normal" text-anchor="start" font-family="Liberation Sans" >210</text><line x1="494.72" y1="282" x2="494.72" y2="284.2" stroke="#333" stroke-width="0.45"/><line x1="496.68" y1="282" x2="496.68" y2="284.2" stroke="#333" stroke-width="0.45"/><line x1="498.65" y1="282" x2="498.65" y2="284.2" stroke="#333" stroke-width="0.45"/><line x1="500.62" y1="282" x2="500.62" y2="284.2" stroke="#333" stroke-width="0.45"/><line x1="502.58" y1="282" x2="502.58" y2="284.2" stroke="#333" stroke-width="0.45"/><line x1="504.55" y1="282" x2="504.55" y2="284.2" stroke="#333" stroke-width="0.45"/><line x1="506.52" y1="282" x2="506.52" y2="284.2" stroke="#333" stroke-width="0.45"/><line x1="508.49" y1="282" x2="508.49" y2="284.2" stroke="#333" stroke-width="0.45"/><line x1="510.45" y1="282" x2="510.45" y2="284.2" stroke="#333" stroke-width="0.45"/><line x1="512.42" y1="280" x2="512.42" y2="286" stroke="#222" stroke-width="0.6"/><text x="512.12" y="292.4" font-size="6.3" fill="#222" stroke="#222" stroke-width="0.13" font-weight="normal" text-anchor="start" font-family="Liberation Sans" >220</text><line x1="514.39" y1="282" x2="514.39" y2="284.2" stroke="#333" stroke-width="0.45"/><line x1="516.35" y1="282" x2="516.35" y2="284.2" stroke="#333" stroke-width="0.45"/><line x1="518.32" y1="282" x2="518.32" y2="284.2" stroke="#333" stroke-width="0.45"/><line x1="520.29" y1="282" x2="520.29" y2="284.2" stroke="#333" stroke-width="0.45"/><line x1="522.25" y1="282" x2="522.25" y2="284.2" stroke="#333" stroke-width="0.45"/><line x1="524.22" y1="282" x2="524.22" y2="284.2" stroke="#333" stroke-width="0.45"/><line x1="526.19" y1="282" x2="526.19" y2="284.2" stroke="#333" stroke-width="0.45"/><line x1="528.16" y1="282" x2="528.16" y2="284.2" stroke="#333" stroke-width="0.45"/><line x1="530.12" y1="282" x2="530.12" y2="284.2" stroke="#333" stroke-width="0.45"/><line x1="532.09" y1="280" x2="532.09" y2="286" stroke="#222" stroke-width="0.6"/><text x="531.79" y="292.4" font-size="6.3" fill="#222" stroke="#222" stroke-width="0.13" font-weight="normal" text-anchor="start" font-family="Liberation Sans" >230</text><line x1="534.06" y1="282" x2="534.06" y2="284.2" stroke="#333" stroke-width="0.45"/><line x1="536.02" y1="282" x2="536.02" y2="284.2" stroke="#333" stroke-width="0.45"/><line x1="537.99" y1="282" x2="537.99" y2="284.2" stroke="#333" stroke-width="0.45"/><line x1="539.96" y1="282" x2="539.96" y2="284.2" stroke="#333" stroke-width="0.45"/><line x1="541.92" y1="282" x2="541.92" y2="284.2" stroke="#333" stroke-width="0.45"/><line x1="543.89" y1="282" x2="543.89" y2="284.2" stroke="#333" stroke-width="0.45"/><line x1="545.86" y1="282" x2="545.86" y2="284.2" stroke="#333" stroke-width="0.45"/><line x1="547.83" y1="282" x2="547.83" y2="284.2" stroke="#333" stroke-width="0.45"/><line x1="549.79" y1="282" x2="549.79" y2="284.2" stroke="#333" stroke-width="0.45"/><line x1="551.76" y1="280" x2="551.76" y2="286" stroke="#222" stroke-width="0.6"/><text x="551.46" y="292.4" font-size="6.3" fill="#222" stroke="#222" stroke-width="0.13" font-weight="normal" text-anchor="start" font-family="Liberation Sans" >240</text><line x1="553.73" y1="282" x2="553.73" y2="284.2" stroke="#333" stroke-width="0.45"/><line x1="555.69" y1="282" x2="555.69" y2="284.2" stroke="#333" stroke-width="0.45"/><line x1="557.66" y1="282" x2="557.66" y2="284.2" stroke="#333" stroke-width="0.45"/><line x1="559.63" y1="282" x2="559.63" y2="284.2" stroke="#333" stroke-width="0.45"/><line x1="561.60" y1="282" x2="561.60" y2="284.2" stroke="#333" stroke-width="0.45"/><line x1="563.56" y1="282" x2="563.56" y2="284.2" stroke="#333" stroke-width="0.45"/><line x1="565.53" y1="282" x2="565.53" y2="284.2" stroke="#333" stroke-width="0.45"/><line x1="567.50" y1="282" x2="567.50" y2="284.2" stroke="#333" stroke-width="0.45"/><line x1="569.46" y1="282" x2="569.46" y2="284.2" stroke="#333" stroke-width="0.45"/><line x1="571.43" y1="280" x2="571.43" y2="286" stroke="#222" stroke-width="0.6"/><text x="571.13" y="292.4" font-size="6.3" fill="#222" stroke="#222" stroke-width="0.13" font-weight="normal" text-anchor="start" font-family="Liberation Sans" >250</text><line x1="573.40" y1="282" x2="573.40" y2="284.2" stroke="#333" stroke-width="0.45"/><line x1="575.36" y1="282" x2="575.36" y2="284.2" stroke="#333" stroke-width="0.45"/><line x1="577.33" y1="282" x2="577.33" y2="284.2" stroke="#333" stroke-width="0.45"/><line x1="579.30" y1="282" x2="579.30" y2="284.2" stroke="#333" stroke-width="0.45"/><line x1="581.26" y1="282" x2="581.26" y2="284.2" stroke="#333" stroke-width="0.45"/><line x1="583.23" y1="282" x2="583.23" y2="284.2" stroke="#333" stroke-width="0.45"/><line x1="585.20" y1="282" x2="585.20" y2="284.2" stroke="#333" stroke-width="0.45"/><line x1="587.17" y1="282" x2="587.17" y2="284.2" stroke="#333" stroke-width="0.45"/><line x1="589.13" y1="282" x2="589.13" y2="284.2" stroke="#333" stroke-width="0.45"/><line x1="591.10" y1="280" x2="591.10" y2="286" stroke="#222" stroke-width="0.6"/><text x="590.8000000000001" y="292.4" font-size="6.3" fill="#222" stroke="#222" stroke-width="0.13" font-weight="normal" text-anchor="start" font-family="Liberation Sans" >260</text><line x1="593.07" y1="282" x2="593.07" y2="284.2" stroke="#333" stroke-width="0.45"/><line x1="595.03" y1="282" x2="595.03" y2="284.2" stroke="#333" stroke-width="0.45"/><line x1="597.00" y1="282" x2="597.00" y2="284.2" stroke="#333" stroke-width="0.45"/><line x1="598.97" y1="282" x2="598.97" y2="284.2" stroke="#333" stroke-width="0.45"/><line x1="600.93" y1="282" x2="600.93" y2="284.2" stroke="#333" stroke-width="0.45"/><line x1="602.90" y1="282" x2="602.90" y2="284.2" stroke="#333" stroke-width="0.45"/><line x1="604.87" y1="282" x2="604.87" y2="284.2" stroke="#333" stroke-width="0.45"/><line x1="606.84" y1="282" x2="606.84" y2="284.2" stroke="#333" stroke-width="0.45"/><line x1="608.80" y1="282" x2="608.80" y2="284.2" stroke="#333" stroke-width="0.45"/><line x1="610.77" y1="280" x2="610.77" y2="286" stroke="#222" stroke-width="0.6"/><text x="610.47" y="292.4" font-size="6.3" fill="#222" stroke="#222" stroke-width="0.13" font-weight="normal" text-anchor="start" font-family="Liberation Sans" >270</text><line x1="612.74" y1="282" x2="612.74" y2="284.2" stroke="#333" stroke-width="0.45"/><line x1="614.70" y1="282" x2="614.70" y2="284.2" stroke="#333" stroke-width="0.45"/><line x1="616.67" y1="282" x2="616.67" y2="284.2" stroke="#333" stroke-width="0.45"/><line x1="618.64" y1="282" x2="618.64" y2="284.2" stroke="#333" stroke-width="0.45"/><line x1="620.61" y1="282" x2="620.61" y2="284.2" stroke="#333" stroke-width="0.45"/><line x1="622.57" y1="282" x2="622.57" y2="284.2" stroke="#333" stroke-width="0.45"/><line x1="624.54" y1="282" x2="624.54" y2="284.2" stroke="#333" stroke-width="0.45"/><line x1="626.51" y1="282" x2="626.51" y2="284.2" stroke="#333" stroke-width="0.45"/><line x1="628.47" y1="282" x2="628.47" y2="284.2" stroke="#333" stroke-width="0.45"/><line x1="630.44" y1="280" x2="630.44" y2="286" stroke="#222" stroke-width="0.6"/><text x="630.1400000000001" y="292.4" font-size="6.3" fill="#222" stroke="#222" stroke-width="0.13" font-weight="normal" text-anchor="start" font-family="Liberation Sans" >280</text><line x1="632.41" y1="282" x2="632.41" y2="284.2" stroke="#333" stroke-width="0.45"/><line x1="634.37" y1="282" x2="634.37" y2="284.2" stroke="#333" stroke-width="0.45"/><line x1="636.34" y1="282" x2="636.34" y2="284.2" stroke="#333" stroke-width="0.45"/><line x1="638.31" y1="282" x2="638.31" y2="284.2" stroke="#333" stroke-width="0.45"/><line x1="640.27" y1="282" x2="640.27" y2="284.2" stroke="#333" stroke-width="0.45"/><line x1="642.24" y1="282" x2="642.24" y2="284.2" stroke="#333" stroke-width="0.45"/><line x1="644.21" y1="282" x2="644.21" y2="284.2" stroke="#333" stroke-width="0.45"/><line x1="646.18" y1="282" x2="646.18" y2="284.2" stroke="#333" stroke-width="0.45"/><line x1="648.14" y1="282" x2="648.14" y2="284.2" stroke="#333" stroke-width="0.45"/><line x1="650.11" y1="280" x2="650.11" y2="286" stroke="#222" stroke-width="0.6"/><text x="649.8100000000001" y="292.4" font-size="6.3" fill="#222" stroke="#222" stroke-width="0.13" font-weight="normal" text-anchor="start" font-family="Liberation Sans" >290</text><line x1="652.08" y1="282" x2="652.08" y2="284.2" stroke="#333" stroke-width="0.45"/><line x1="654.04" y1="282" x2="654.04" y2="284.2" stroke="#333" stroke-width="0.45"/><line x1="656.01" y1="282" x2="656.01" y2="284.2" stroke="#333" stroke-width="0.45"/><line x1="657.98" y1="282" x2="657.98" y2="284.2" stroke="#333" stroke-width="0.45"/><line x1="659.94" y1="282" x2="659.94" y2="284.2" stroke="#333" stroke-width="0.45"/><line x1="661.91" y1="282" x2="661.91" y2="284.2" stroke="#333" stroke-width="0.45"/><line x1="663.88" y1="282" x2="663.88" y2="284.2" stroke="#333" stroke-width="0.45"/><line x1="665.85" y1="282" x2="665.85" y2="284.2" stroke="#333" stroke-width="0.45"/><line x1="667.81" y1="282" x2="667.81" y2="284.2" stroke="#333" stroke-width="0.45"/><line x1="669.78" y1="280" x2="669.78" y2="286" stroke="#222" stroke-width="0.6"/><text x="669.48" y="292.4" font-size="6.3" fill="#222" stroke="#222" stroke-width="0.13" font-weight="normal" text-anchor="start" font-family="Liberation Sans" >300</text><line x1="671.75" y1="282" x2="671.75" y2="284.2" stroke="#333" stroke-width="0.45"/><line x1="673.71" y1="282" x2="673.71" y2="284.2" stroke="#333" stroke-width="0.45"/><line x1="675.68" y1="282" x2="675.68" y2="284.2" stroke="#333" stroke-width="0.45"/><line x1="677.65" y1="282" x2="677.65" y2="284.2" stroke="#333" stroke-width="0.45"/><line x1="679.62" y1="282" x2="679.62" y2="284.2" stroke="#333" stroke-width="0.45"/><line x1="681.58" y1="282" x2="681.58" y2="284.2" stroke="#333" stroke-width="0.45"/><line x1="683.55" y1="282" x2="683.55" y2="284.2" stroke="#333" stroke-width="0.45"/><line x1="685.52" y1="282" x2="685.52" y2="284.2" stroke="#333" stroke-width="0.45"/><line x1="687.48" y1="282" x2="687.48" y2="284.2" stroke="#333" stroke-width="0.45"/><line x1="689.45" y1="280" x2="689.45" y2="286" stroke="#222" stroke-width="0.6"/><text x="689.1500000000001" y="292.4" font-size="6.3" fill="#222" stroke="#222" stroke-width="0.13" font-weight="normal" text-anchor="start" font-family="Liberation Sans" >310</text><line x1="691.42" y1="282" x2="691.42" y2="284.2" stroke="#333" stroke-width="0.45"/><line x1="693.38" y1="282" x2="693.38" y2="284.2" stroke="#333" stroke-width="0.45"/><line x1="695.35" y1="282" x2="695.35" y2="284.2" stroke="#333" stroke-width="0.45"/><line x1="697.32" y1="282" x2="697.32" y2="284.2" stroke="#333" stroke-width="0.45"/><line x1="699.28" y1="282" x2="699.28" y2="284.2" stroke="#333" stroke-width="0.45"/><line x1="701.25" y1="282" x2="701.25" y2="284.2" stroke="#333" stroke-width="0.45"/><line x1="703.22" y1="282" x2="703.22" y2="284.2" stroke="#333" stroke-width="0.45"/><line x1="705.19" y1="282" x2="705.19" y2="284.2" stroke="#333" stroke-width="0.45"/><line x1="707.15" y1="282" x2="707.15" y2="284.2" stroke="#333" stroke-width="0.45"/><line x1="709.12" y1="280" x2="709.12" y2="286" stroke="#222" stroke-width="0.6"/><text x="708.82" y="292.4" font-size="6.3" fill="#222" stroke="#222" stroke-width="0.13" font-weight="normal" text-anchor="start" font-family="Liberation Sans" >320</text><line x1="711.09" y1="282" x2="711.09" y2="284.2" stroke="#333" stroke-width="0.45"/><line x1="713.05" y1="282" x2="713.05" y2="284.2" stroke="#333" stroke-width="0.45"/><line x1="715.02" y1="282" x2="715.02" y2="284.2" stroke="#333" stroke-width="0.45"/><line x1="716.99" y1="282" x2="716.99" y2="284.2" stroke="#333" stroke-width="0.45"/><line x1="718.95" y1="282" x2="718.95" y2="284.2" stroke="#333" stroke-width="0.45"/><line x1="720.92" y1="282" x2="720.92" y2="284.2" stroke="#333" stroke-width="0.45"/><line x1="722.89" y1="282" x2="722.89" y2="284.2" stroke="#333" stroke-width="0.45"/><line x1="724.86" y1="282" x2="724.86" y2="284.2" stroke="#333" stroke-width="0.45"/><line x1="726.82" y1="282" x2="726.82" y2="284.2" stroke="#333" stroke-width="0.45"/><line x1="728.79" y1="280" x2="728.79" y2="286" stroke="#222" stroke-width="0.6"/><text x="728.49" y="292.4" font-size="6.3" fill="#222" stroke="#222" stroke-width="0.13" font-weight="normal" text-anchor="start" font-family="Liberation Sans" >330</text><line x1="730.76" y1="282" x2="730.76" y2="284.2" stroke="#333" stroke-width="0.45"/><line x1="732.72" y1="282" x2="732.72" y2="284.2" stroke="#333" stroke-width="0.45"/><line x1="734.69" y1="282" x2="734.69" y2="284.2" stroke="#333" stroke-width="0.45"/><line x1="736.66" y1="282" x2="736.66" y2="284.2" stroke="#333" stroke-width="0.45"/><line x1="738.62" y1="282" x2="738.62" y2="284.2" stroke="#333" stroke-width="0.45"/><line x1="740.59" y1="282" x2="740.59" y2="284.2" stroke="#333" stroke-width="0.45"/><line x1="742.56" y1="282" x2="742.56" y2="284.2" stroke="#333" stroke-width="0.45"/><line x1="744.53" y1="282" x2="744.53" y2="284.2" stroke="#333" stroke-width="0.45"/><line x1="746.49" y1="282" x2="746.49" y2="284.2" stroke="#333" stroke-width="0.45"/><line x1="748.46" y1="280" x2="748.46" y2="286" stroke="#222" stroke-width="0.6"/><text x="748.1600000000001" y="292.4" font-size="6.3" fill="#222" stroke="#222" stroke-width="0.13" font-weight="normal" text-anchor="start" font-family="Liberation Sans" >340</text><line x1="750.43" y1="282" x2="750.43" y2="284.2" stroke="#333" stroke-width="0.45"/><line x1="752.39" y1="282" x2="752.39" y2="284.2" stroke="#333" stroke-width="0.45"/><line x1="754.36" y1="282" x2="754.36" y2="284.2" stroke="#333" stroke-width="0.45"/><line x1="756.33" y1="282" x2="756.33" y2="284.2" stroke="#333" stroke-width="0.45"/><line x1="758.30" y1="282" x2="758.30" y2="284.2" stroke="#333" stroke-width="0.45"/><line x1="760.26" y1="282" x2="760.26" y2="284.2" stroke="#333" stroke-width="0.45"/><line x1="762.23" y1="282" x2="762.23" y2="284.2" stroke="#333" stroke-width="0.45"/><line x1="764.20" y1="282" x2="764.20" y2="284.2" stroke="#333" stroke-width="0.45"/><line x1="766.16" y1="282" x2="766.16" y2="284.2" stroke="#333" stroke-width="0.45"/><line x1="768.13" y1="280" x2="768.13" y2="286" stroke="#222" stroke-width="0.6"/><text x="767.83" y="292.4" font-size="6.3" fill="#222" stroke="#222" stroke-width="0.13" font-weight="normal" text-anchor="start" font-family="Liberation Sans" >350</text><line x1="770.10" y1="282" x2="770.10" y2="284.2" stroke="#333" stroke-width="0.45"/><line x1="772.06" y1="282" x2="772.06" y2="284.2" stroke="#333" stroke-width="0.45"/><line x1="774.03" y1="282" x2="774.03" y2="284.2" stroke="#333" stroke-width="0.45"/><line x1="776.00" y1="282" x2="776.00" y2="284.2" stroke="#333" stroke-width="0.45"/><line x1="777.96" y1="282" x2="777.96" y2="284.2" stroke="#333" stroke-width="0.45"/><line x1="779.93" y1="282" x2="779.93" y2="284.2" stroke="#333" stroke-width="0.45"/><line x1="781.90" y1="282" x2="781.90" y2="284.2" stroke="#333" stroke-width="0.45"/><line x1="783.87" y1="282" x2="783.87" y2="284.2" stroke="#333" stroke-width="0.45"/><line x1="785.83" y1="282" x2="785.83" y2="284.2" stroke="#333" stroke-width="0.45"/><line x1="787.80" y1="280" x2="787.80" y2="286" stroke="#222" stroke-width="0.6"/><text x="787.5" y="292.4" font-size="6.3" fill="#222" stroke="#222" stroke-width="0.13" font-weight="normal" text-anchor="start" font-family="Liberation Sans" >360</text><line x1="789.77" y1="282" x2="789.77" y2="284.2" stroke="#333" stroke-width="0.45"/><line x1="791.73" y1="282" x2="791.73" y2="284.2" stroke="#333" stroke-width="0.45"/><line x1="793.70" y1="282" x2="793.70" y2="284.2" stroke="#333" stroke-width="0.45"/><line x1="795.67" y1="282" x2="795.67" y2="284.2" stroke="#333" stroke-width="0.45"/><line x1="797.63" y1="282" x2="797.63" y2="284.2" stroke="#333" stroke-width="0.45"/><line x1="799.60" y1="282" x2="799.60" y2="284.2" stroke="#333" stroke-width="0.45"/><line x1="801.57" y1="282" x2="801.57" y2="284.2" stroke="#333" stroke-width="0.45"/><line x1="803.54" y1="282" x2="803.54" y2="284.2" stroke="#333" stroke-width="0.45"/><line x1="805.50" y1="282" x2="805.50" y2="284.2" stroke="#333" stroke-width="0.45"/><line x1="807.47" y1="280" x2="807.47" y2="286" stroke="#222" stroke-width="0.6"/><text x="807.1700000000001" y="292.4" font-size="6.3" fill="#222" stroke="#222" stroke-width="0.13" font-weight="normal" text-anchor="start" font-family="Liberation Sans" >370</text><line x1="809.44" y1="282" x2="809.44" y2="284.2" stroke="#333" stroke-width="0.45"/><line x1="811.40" y1="282" x2="811.40" y2="284.2" stroke="#333" stroke-width="0.45"/><line x1="813.37" y1="282" x2="813.37" y2="284.2" stroke="#333" stroke-width="0.45"/><line x1="815.34" y1="282" x2="815.34" y2="284.2" stroke="#333" stroke-width="0.45"/><line x1="817.31" y1="282" x2="817.31" y2="284.2" stroke="#333" stroke-width="0.45"/><line x1="819.27" y1="282" x2="819.27" y2="284.2" stroke="#333" stroke-width="0.45"/><line x1="821.24" y1="282" x2="821.24" y2="284.2" stroke="#333" stroke-width="0.45"/><line x1="823.21" y1="282" x2="823.21" y2="284.2" stroke="#333" stroke-width="0.45"/><line x1="825.17" y1="282" x2="825.17" y2="284.2" stroke="#333" stroke-width="0.45"/><line x1="827.14" y1="280" x2="827.14" y2="286" stroke="#222" stroke-width="0.6"/><text x="826.84" y="292.4" font-size="6.3" fill="#222" stroke="#222" stroke-width="0.13" font-weight="normal" text-anchor="start" font-family="Liberation Sans" >380</text><line x1="829.11" y1="282" x2="829.11" y2="284.2" stroke="#333" stroke-width="0.45"/><line x1="831.07" y1="282" x2="831.07" y2="284.2" stroke="#333" stroke-width="0.45"/><line x1="833.04" y1="282" x2="833.04" y2="284.2" stroke="#333" stroke-width="0.45"/><line x1="835.01" y1="282" x2="835.01" y2="284.2" stroke="#333" stroke-width="0.45"/><line x1="836.98" y1="282" x2="836.98" y2="284.2" stroke="#333" stroke-width="0.45"/><line x1="838.94" y1="282" x2="838.94" y2="284.2" stroke="#333" stroke-width="0.45"/><line x1="840.91" y1="282" x2="840.91" y2="284.2" stroke="#333" stroke-width="0.45"/><line x1="842.88" y1="282" x2="842.88" y2="284.2" stroke="#333" stroke-width="0.45"/><line x1="844.84" y1="282" x2="844.84" y2="284.2" stroke="#333" stroke-width="0.45"/><line x1="846.81" y1="280" x2="846.81" y2="286" stroke="#222" stroke-width="0.6"/><text x="846.51" y="292.4" font-size="6.3" fill="#222" stroke="#222" stroke-width="0.13" font-weight="normal" text-anchor="start" font-family="Liberation Sans" >390</text><line x1="848.78" y1="282" x2="848.78" y2="284.2" stroke="#333" stroke-width="0.45"/><line x1="850.74" y1="282" x2="850.74" y2="284.2" stroke="#333" stroke-width="0.45"/><line x1="852.71" y1="282" x2="852.71" y2="284.2" stroke="#333" stroke-width="0.45"/><line x1="854.68" y1="282" x2="854.68" y2="284.2" stroke="#333" stroke-width="0.45"/><line x1="856.64" y1="282" x2="856.64" y2="284.2" stroke="#333" stroke-width="0.45"/><line x1="858.61" y1="282" x2="858.61" y2="284.2" stroke="#333" stroke-width="0.45"/><line x1="860.58" y1="282" x2="860.58" y2="284.2" stroke="#333" stroke-width="0.45"/><line x1="862.55" y1="282" x2="862.55" y2="284.2" stroke="#333" stroke-width="0.45"/><line x1="864.51" y1="282" x2="864.51" y2="284.2" stroke="#333" stroke-width="0.45"/><line x1="866.48" y1="280" x2="866.48" y2="286" stroke="#222" stroke-width="0.6"/><text x="866.1800000000001" y="292.4" font-size="6.3" fill="#222" stroke="#222" stroke-width="0.13" font-weight="normal" text-anchor="start" font-family="Liberation Sans" >400</text><line x1="868.45" y1="282" x2="868.45" y2="284.2" stroke="#333" stroke-width="0.45"/><line x1="870.41" y1="282" x2="870.41" y2="284.2" stroke="#333" stroke-width="0.45"/><line x1="872.38" y1="282" x2="872.38" y2="284.2" stroke="#333" stroke-width="0.45"/><line x1="874.35" y1="282" x2="874.35" y2="284.2" stroke="#333" stroke-width="0.45"/><line x1="876.32" y1="282" x2="876.32" y2="284.2" stroke="#333" stroke-width="0.45"/><line x1="878.28" y1="282" x2="878.28" y2="284.2" stroke="#333" stroke-width="0.45"/><line x1="880.25" y1="282" x2="880.25" y2="284.2" stroke="#333" stroke-width="0.45"/><line x1="882.22" y1="282" x2="882.22" y2="284.2" stroke="#333" stroke-width="0.45"/></svg><div class="a" style="left:884px;top:69px;width:7.5px;height:212px;background:#e6e6e5;border-left:0.6px solid #d6d6d6"></div><div class="a" style="left:885.5px;top:69.5px;width:5.5px;height:169px;background:#f4f4f3;border:0.6px solid #d2d2d2;border-radius:2.5px;box-sizing:border-box"></div><div class="t" style="left:885.6px;top:272px;font-size:5px;color:#555">&#9662;</div><div class="a" style="left:143px;top:309px;width:741px;height:7px;background:#e3e3e2;border-top:0.6px solid #d4d4d4"></div><div class="a" style="left:143px;top:309.6px;width:380px;height:5.6px;background:#f2f2f1;border:0.6px solid #cfcfcf;border-radius:3px;box-sizing:border-box"></div><div class="t" style="left:879px;top:309.8px;font-size:5px;color:#555">&#9656;</div><div class="a" style="left:616px;top:0;width:284px;height:68.8px;background:#fff"></div><svg style="left:0;top:0" width="900" height="70" viewBox="0 0 900 70"><defs><clipPath id="lc"><circle cx="648.1" cy="34.2" r="25.1"/></clipPath></defs><g clip-path="url(#lc)"><rect x="620" y="8" width="56" height="54" fill="#ae9a12"/><rect x="620" y="21.7" width="56" height="2.2" fill="#fdf9df"/><rect x="648.1" y="24.9" width="28" height="7.6" fill="#fff"/><rect x="620" y="33.5" width="56" height="1.9" fill="#fdf9df"/><rect x="620" y="36.3" width="27.5" height="7" fill="#fff"/><rect x="620" y="44.6" width="56" height="2.2" fill="#fdf9df"/></g><path d="M695.2 26.3 Q692.5 24.8 689.5 24.8 Q685.3 24.8 685.3 28.3 Q685.3 31 690 32.3 Q695.5 33.8 695.5 38.2 Q695.5 42.3 690 42.3 Q686.2 42.3 684.6 40.2" fill="none" stroke="#ae9a12" stroke-width="5.3" stroke-linecap="butt"/><path d="M698.7 22.5 H704.7 L709.2 30.3 L713.7 22.5 H719.7 L709.2 36.3Z" fill="#ae9a12"/><path d="M706.6 37.2 L709.2 39.6 L711.8 37.2 V44.3 H706.6Z" fill="#ae9a12"/><path d="M721.3 44.4 V22.9 H727.3 L733.4 34.5 L739.5 22.9 H745.5 V44.4 H740.3 V32 L735.2 41.2 H731.6 L726.5 32 V44.4Z" fill="#ae9a12"/><path d="M749.3 22.9 H765.3 V28 H760.4 V44.4 H754.2 V28 H749.3Z" fill="#ae9a12"/><path d="M765.7 44.4 L772.4 22.9 H780.5 L786.3 44.4 H780.4 L779.3 40.2 H773.3 L772 44.4Z M774.5 35.6 H778 L776.2 28.5Z" fill="#ae9a12" fill-rule="evenodd"/><path d="M788.6 23 H792.6 L800 39.6 L807.4 23 H811.4 L801.9 44.3 H798.1Z" fill="#1d3f77"/><rect x="812.4" y="23" width="3.4" height="21.3" fill="#1d3f77"/><path d="M832 26.2 Q830 24.4 826.6 24.4 Q821.7 24.4 821.7 28.6 Q821.7 31.8 826.8 33.2 Q832.2 34.7 832.2 38.5 Q832.2 42.8 826.6 42.8 Q822.6 42.8 820.5 40.3" fill="none" stroke="#1d3f77" stroke-width="3.5"/><rect x="838.6" y="23" width="3.4" height="21.3" fill="#1d3f77"/><ellipse cx="860.7" cy="33.6" rx="10.9" ry="9.4" fill="none" stroke="#1d3f77" stroke-width="3.5"/><path d="M878.1 44.3 V23 H882 L891.6 37.6 V23 H895.3 V44.3 H891.5 L881.8 29.7 V44.3Z" fill="#1d3f77"/></svg><div class="a" style="left:0;top:290px;width:11px;height:259px;background:#efeeec"></div><div class="a" style="left:2.5px;top:290px;width:1.5px;height:259px;background:#d6d6d6"></div><div class="a" style="left:10.5px;top:286.5px;width:378px;height:263px;background:#efeeec;border-left:0.8px solid #cfcfcf;border-top:0.8px solid #d6d6d6;border-radius:3px 0 0 0;box-sizing:border-box"></div><div class="a" style="left:62px;top:287px;width:229px;height:12.6px;background:#ecebe9;border-bottom:0.8px solid #d2d2d2"></div><div class="a" style="left:290.7px;top:299.3px;width:97.5px;height:0.8px;background:#d6d6d6"></div><div class="a" style="left:131.6px;top:287px;width:0.8px;height:12.6px;background:#cdcdcd"></div><div class="a" style="left:217.3px;top:287px;width:0.8px;height:12.6px;background:#cdcdcd"></div><div class="a" style="left:290.7px;top:287px;width:0.8px;height:12.6px;background:#cdcdcd"></div><svg style="left:55px;top:286.5px" width="22" height="14"><path d="M0 0.3 H6 Q9 0.3 12 6 Q15 12.8 20 12.8 V13.5 H0Z" fill="#f3f2f0"/><path d="M0 0.3 H6 Q9 0.3 12 6 Q15 12.8 20 12.8" fill="none" stroke="#cdcdcd" stroke-width="0.8"/></svg><div class="a" style="left:11.3px;top:287.3px;width:44px;height:12.5px;background:#f3f2f0"></div><svg style="left:12.5px;top:290.2px" width="6.5" height="6" viewBox="0 0 8 7"><path d="M0.5 6.5 L2 3 L4 4.5 L7.5 0.5 V6.5Z" fill="#d33"/><path d="M0.5 6.5 L2.5 4.5 L4.5 5.5 L7.5 3 V6.5Z" fill="#4a8a3a"/><path d="M0.5 4 L3 1.5 L5 3 L7.5 1" stroke="#3a5fb0" stroke-width="0.8" fill="none"/><path d="M0.5 0 V6.5 H8" stroke="#555" stroke-width="0.5" fill="none"/></svg><div class="t" style="left:21px;top:291.2px;font-size:6.35px;color:#555">Dashboard</div><svg style="left:55px;top:291.3px" width="5" height="4.6"><path d="M0.5 0.5 L4.5 4.1 M4.5 0.5 L0.5 4.1" stroke="#555" stroke-width="0.9" stroke-dasharray="1 0.5"/></svg><svg style="left:72.5px;top:289.7px" width="6.5" height="6" viewBox="0 0 8 7"><path d="M0.5 0.5 V6.5 H7.5" stroke="#777" stroke-width="0.7" fill="none"/><path d="M1 1 L7.5 6 H1Z" fill="#e8e070"/><path d="M1 1 L7.5 6" stroke="#c8a030" stroke-width="0.7"/></svg><div class="t" style="left:80px;top:291.2px;font-size:6.35px;color:#555">Worst Case Gantt</div><svg style="left:133.5px;top:289.7px" width="6.5" height="6" viewBox="0 0 8 7"><path d="M0.5 0.5 V6.5 H7.5" stroke="#777" stroke-width="0.7" fill="none"/><path d="M1 1 L7.5 6 H1Z" fill="#e8e070"/><path d="M1 1 L7.5 6" stroke="#c8a030" stroke-width="0.7"/></svg><div class="t" style="left:141.5px;top:291.2px;font-size:6.5px;color:#555">System Distribution Gantt</div><svg style="left:219.5px;top:289.7px" width="6.5" height="6" viewBox="0 0 8 7"><path d="M0.5 0.5 V6.5 H7.5" stroke="#777" stroke-width="0.7" fill="none"/><path d="M1 1 L7.5 6 H1Z" fill="#e8e070"/><path d="M1 1 L7.5 6" stroke="#c8a030" stroke-width="0.7"/></svg><div class="t" style="left:227px;top:291.2px;font-size:6.5px;color:#555">Imported Trace Gantt</div><div class="a" style="left:11.3px;top:314.6px;width:374.5px;height:235px;background:#ebeae8;border-top:0.8px solid #d2d2d2"></div><div class="a" style="left:10.8px;top:316.3px;width:188.5px;height:126.5px;background:#fff;border:0.8px solid #dadada;box-sizing:border-box"></div><div class="a" style="left:200.2px;top:317px;width:184.8px;height:125.7px;background:#fff;border:0.8px solid #dadada;box-sizing:border-box"></div><div class="t" style="left:202.8px;top:319.50px;font-size:6.4px;color:#555">Name</div><div class="a" style="left:201px;top:326.95px;width:183px;height:9.75px;background:#ebebeb"></div><div class="t" style="left:202.8px;top:329.25px;font-size:6.4px;color:#555">Path</div><div class="t" style="left:202.8px;top:339.00px;font-size:6.4px;color:#555">Model Status</div><div class="a" style="left:201px;top:346.45px;width:183px;height:9.75px;background:#ebebeb"></div><div class="t" style="left:202.8px;top:348.75px;font-size:6.4px;color:#555">Model Errors</div><div class="t" style="left:202.8px;top:358.50px;font-size:6.4px;color:#555">Model Warnings</div><div class="a" style="left:201px;top:365.95px;width:183px;height:9.75px;background:#ebebeb"></div><div class="t" style="left:202.8px;top:368.25px;font-size:6.4px;color:#555">Timing Status</div><div class="t" style="left:202.8px;top:378.00px;font-size:6.4px;color:#555">Timing Errors</div><div class="a" style="left:201px;top:385.45px;width:183px;height:9.75px;background:#ebebeb"></div><div class="t" style="left:202.8px;top:387.75px;font-size:6.4px;color:#555">Timing Warnings</div><div class="a" style="left:12px;top:444.4px;width:373px;height:105px;background:#fff;border-left:0.8px solid #dadada;border-top:0.8px solid #dadada;box-sizing:border-box"></div><div class="a" style="left:385.3px;top:315px;width:1.2px;height:234px;background:#d6d6d6"></div><div class="a" style="left:387.6px;top:334px;width:1px;height:200px;background:#e0a898"></div><svg style="left:0;top:0" width="900" height="549" viewBox="0 0 900 549"><text x="106.2" y="325.4" font-size="9.9" fill="#111" stroke="#111" stroke-width="0.13" font-weight="bold" text-anchor="middle" font-family="Liberation Sans" >Worst Case Load of CPUCore1</text><text x="105.2" y="439.2" font-size="6" fill="#111" stroke="#111" stroke-width="0.13" font-weight="bold" text-anchor="middle" font-family="Liberation Sans" >Total Load: 46.8%</text><path d="M105.8 378.2 L105.80 344.20 A34 34 0 0 1 125.78 350.69Z" fill="#46679a"/><path d="M105.8 378.2 L125.78 350.69 A34 34 0 0 1 138.14 367.69Z" fill="#973a3a"/><path d="M105.8 378.2 L138.14 367.69 A34 34 0 0 1 138.14 388.71Z" fill="#7a953d"/><path d="M105.8 378.2 L138.14 388.71 A34 34 0 0 1 129.07 402.98Z" fill="#5e4a86"/><path d="M105.8 378.2 L129.07 402.98 A34 34 0 0 1 125.78 405.71Z" fill="#d07a2a"/><path d="M105.8 378.2 L125.78 405.71 A34 34 0 0 1 122.18 407.99Z" fill="#3a8a9c"/><path d="M105.8 378.2 L122.18 407.99 A34 34 0 0 1 116.71 410.40Z" fill="#4a7ab8"/><path d="M105.8 378.2 L116.71 410.40 A34 34 0 0 1 112.59 411.52Z" fill="#b04040"/><path d="M99.33 378.85 L106.12 412.17 A34 34 0 1 1 99.33 344.85Z" fill="#686868"/><text x="46.5" y="381.5" font-size="6" fill="#333" stroke="#333" stroke-width="0.13" font-weight="normal" text-anchor="middle" font-family="Liberation Sans" >Idle:</text><text x="47.7" y="387" font-size="6" fill="#333" stroke="#333" stroke-width="0.13" font-weight="normal" text-anchor="middle" font-family="Liberation Sans" >53.20%</text><path d="M58 384 L72 383" stroke="#333" stroke-width="0.5" fill="none"/><text x="163.5" y="341" font-size="6" fill="#333" stroke="#333" stroke-width="0.13" font-weight="normal" text-anchor="middle" font-family="Liberation Sans" >CDL:</text><text x="162.3" y="346.6" font-size="6" fill="#333" stroke="#333" stroke-width="0.13" font-weight="normal" text-anchor="middle" font-family="Liberation Sans" >10.00%</text><text x="167" y="351" font-size="6" fill="#333" stroke="#333" stroke-width="0.13" font-weight="normal" text-anchor="middle" font-family="Liberation Sans" >JoystickNa</text><text x="166" y="356.5" font-size="6" fill="#333" stroke="#333" stroke-width="0.13" font-weight="normal" text-anchor="middle" font-family="Liberation Sans" >v: 10.00%</text><text x="167" y="360.6" font-size="6" fill="#333" stroke="#333" stroke-width="0.13" font-weight="normal" text-anchor="middle" font-family="Liberation Sans" >JoystickSe</text><text x="166" y="365.8" font-size="6" fill="#333" stroke="#333" stroke-width="0.13" font-weight="normal" text-anchor="middle" font-family="Liberation Sans" >rver: 10.0</text><text x="163.5" y="371.2" font-size="6" fill="#333" stroke="#333" stroke-width="0.13" font-weight="normal" text-anchor="middle" font-family="Liberation Sans" >0%</text><text x="159.5" y="375.6" font-size="6" fill="#333" stroke="#333" stroke-width="0.13" font-weight="normal" text-anchor="middle" font-family="Liberation Sans" >Laser:</text><text x="162" y="381" font-size="6" fill="#333" stroke="#333" stroke-width="0.13" font-weight="normal" text-anchor="middle" font-family="Liberation Sans" >8.00%</text><text x="164" y="385.5" font-size="6" fill="#333" stroke="#333" stroke-width="0.13" font-weight="normal" text-anchor="middle" font-family="Liberation Sans" >Mapper:</text><text x="163" y="390.9" font-size="6" fill="#333" stroke="#333" stroke-width="0.13" font-weight="normal" text-anchor="middle" font-family="Liberation Sans" >2.00%</text><text x="160" y="395.3" font-size="6" fill="#333" stroke="#333" stroke-width="0.13" font-weight="normal" text-anchor="middle" font-family="Liberation Sans" >Odom:</text><text x="162" y="399.5" font-size="6" fill="#333" stroke="#333" stroke-width="0.13" font-weight="normal" text-anchor="middle" font-family="Liberation Sans" >2.00%</text><text x="163.5" y="403.9" font-size="6" fill="#333" stroke="#333" stroke-width="0.13" font-weight="normal" text-anchor="middle" font-family="Liberation Sans" >Planner:</text><text x="163" y="408.8" font-size="6" fill="#333" stroke="#333" stroke-width="0.13" font-weight="normal" text-anchor="middle" font-family="Liberation Sans" >2.80%</text><text x="164" y="413" font-size="6" fill="#333" stroke="#333" stroke-width="0.13" font-weight="normal" text-anchor="middle" font-family="Liberation Sans" >VelCmd:</text><text x="163" y="419.2" font-size="6" fill="#333" stroke="#333" stroke-width="0.13" font-weight="normal" text-anchor="middle" font-family="Liberation Sans" >2.00%</text><path d="M113.4 354.9 C121.0 331.3 147 340.5 154 340.5" stroke="#1a1a1a" stroke-width="0.55" fill="none"/><path d="M125.6 363.8 C145.7 349.2 147 351 154 351" stroke="#1a1a1a" stroke-width="0.55" fill="none"/><path d="M130.3 378.2 C155.1 378.2 147 361 154 361" stroke="#1a1a1a" stroke-width="0.55" fill="none"/><path d="M126.5 391.3 C147.4 404.6 147 382 154 376" stroke="#1a1a1a" stroke-width="0.55" fill="none"/><path d="M121.4 397.1 C137.2 416.2 147 392 154 386" stroke="#1a1a1a" stroke-width="0.55" fill="none"/><path d="M118.9 398.9 C132.2 419.8 147 401 154 395" stroke="#1a1a1a" stroke-width="0.55" fill="none"/><path d="M115.7 400.6 C125.7 423.3 147 410 154 404" stroke="#1a1a1a" stroke-width="0.55" fill="none"/><path d="M112.2 401.8 C118.7 425.8 147 419 154 413" stroke="#1a1a1a" stroke-width="0.55" fill="none"/><text x="199.5" y="453" font-size="9.85" fill="#111" stroke="#111" stroke-width="0.13" font-weight="bold" text-anchor="middle" font-family="Liberation Sans" >Relative RT for CPUCore1</text><text x="195.5" y="459.2" font-size="4.5" fill="#111" stroke="#111" stroke-width="0.13" font-weight="bold" text-anchor="middle" font-family="Liberation Sans" >Sorted By Max RT Constraints</text><text x="0" y="0" font-size="6.7" fill="#222" stroke="#222" stroke-width="0.13" font-weight="bold" text-anchor="middle" font-family="Liberation Sans" transform="translate(24.3 498.5) rotate(-90)">Relative Response Time</text><line x1="40" y1="531.50" x2="382.5" y2="531.50" stroke="#bdbdbd" stroke-width="0.5" stroke-dasharray="1 1"/><line x1="37.5" y1="531.50" x2="40" y2="531.50" stroke="#555" stroke-width="0.5"/><text x="36.5" y="533.1" font-size="4.6" fill="#444" stroke="#444" stroke-width="0.13" font-weight="normal" text-anchor="end" font-family="Liberation Sans" >0.00</text><line x1="40" y1="522.38" x2="382.5" y2="522.38" stroke="#bdbdbd" stroke-width="0.5" stroke-dasharray="1 1"/><line x1="37.5" y1="522.38" x2="40" y2="522.38" stroke="#555" stroke-width="0.5"/><text x="36.5" y="523.975" font-size="4.6" fill="#444" stroke="#444" stroke-width="0.13" font-weight="normal" text-anchor="end" font-family="Liberation Sans" >0.25</text><line x1="40" y1="513.25" x2="382.5" y2="513.25" stroke="#bdbdbd" stroke-width="0.5" stroke-dasharray="1 1"/><line x1="37.5" y1="513.25" x2="40" y2="513.25" stroke="#555" stroke-width="0.5"/><text x="36.5" y="514.85" font-size="4.6" fill="#444" stroke="#444" stroke-width="0.13" font-weight="normal" text-anchor="end" font-family="Liberation Sans" >0.50</text><line x1="40" y1="504.12" x2="382.5" y2="504.12" stroke="#bdbdbd" stroke-width="0.5" stroke-dasharray="1 1"/><line x1="37.5" y1="504.12" x2="40" y2="504.12" stroke="#555" stroke-width="0.5"/><text x="36.5" y="505.725" font-size="4.6" fill="#444" stroke="#444" stroke-width="0.13" font-weight="normal" text-anchor="end" font-family="Liberation Sans" >0.75</text><line x1="40" y1="495.00" x2="382.5" y2="495.00" stroke="#bdbdbd" stroke-width="0.5" stroke-dasharray="1 1"/><line x1="37.5" y1="495.00" x2="40" y2="495.00" stroke="#555" stroke-width="0.5"/><text x="36.5" y="496.6" font-size="4.6" fill="#444" stroke="#444" stroke-width="0.13" font-weight="normal" text-anchor="end" font-family="Liberation Sans" >1.00</text><line x1="40" y1="485.88" x2="382.5" y2="485.88" stroke="#bdbdbd" stroke-width="0.5" stroke-dasharray="1 1"/><line x1="37.5" y1="485.88" x2="40" y2="485.88" stroke="#555" stroke-width="0.5"/><text x="36.5" y="487.475" font-size="4.6" fill="#444" stroke="#444" stroke-width="0.13" font-weight="normal" text-anchor="end" font-family="Liberation Sans" >1.25</text><line x1="40" y1="476.75" x2="382.5" y2="476.75" stroke="#bdbdbd" stroke-width="0.5" stroke-dasharray="1 1"/><line x1="37.5" y1="476.75" x2="40" y2="476.75" stroke="#555" stroke-width="0.5"/><text x="36.5" y="478.35" font-size="4.6" fill="#444" stroke="#444" stroke-width="0.13" font-weight="normal" text-anchor="end" font-family="Liberation Sans" >1.50</text><line x1="40" y1="467.62" x2="382.5" y2="467.62" stroke="#bdbdbd" stroke-width="0.5" stroke-dasharray="1 1"/><line x1="37.5" y1="467.62" x2="40" y2="467.62" stroke="#555" stroke-width="0.5"/><text x="36.5" y="469.225" font-size="4.6" fill="#444" stroke="#444" stroke-width="0.13" font-weight="normal" text-anchor="end" font-family="Liberation Sans" >1.75</text><line x1="39.7" y1="462.8" x2="39.7" y2="531.5" stroke="#666" stroke-width="0.6"/><line x1="39.7" y1="531.5" x2="382.5" y2="531.5" stroke="#999" stroke-width="0.8"/><rect x="43.0" y="530.30" width="6.6" height="1.20" fill="#7aa040"/><rect x="54.2" y="519.46" width="6.8" height="12.04" fill="#963636"/><line x1="43.0" y1="495.00" x2="72.0" y2="495.00" stroke="#6a4f96" stroke-width="1.6"/><line x1="70.0" y1="526.75" x2="70.0" y2="529.81" stroke="#222" stroke-width="0.7"/><line x1="66.0" y1="526.75" x2="74.0" y2="526.75" stroke="#333" stroke-width="0.6"/><rect x="65.6" y="527.49" width="8.8" height="1.83" fill="#24484e" stroke="#111" stroke-width="0.5"/><line x1="66.0" y1="530.11" x2="74.0" y2="530.11" stroke="#333" stroke-width="0.5"/><text x="0" y="0" font-size="4.6" fill="#666" stroke="#666" stroke-width="0.13" font-weight="normal" text-anchor="end" font-family="Liberation Sans" transform="translate(61.5 536.2) rotate(-45)">CDL</text><rect x="86.67" y="530.04" width="6.6" height="1.46" fill="#7aa040"/><rect x="97.87" y="465.80" width="6.8" height="65.70" fill="#963636"/><line x1="86.67" y1="495.00" x2="115.67" y2="495.00" stroke="#6a4f96" stroke-width="1.6"/><line x1="113.67" y1="490.25" x2="113.67" y2="527.62" stroke="#222" stroke-width="0.7"/><line x1="109.67" y1="490.25" x2="117.67" y2="490.25" stroke="#333" stroke-width="0.6"/><rect x="109.27" y="524.57" width="8.8" height="2.56" fill="#24484e" stroke="#111" stroke-width="0.5"/><line x1="109.67" y1="527.92" x2="117.67" y2="527.92" stroke="#333" stroke-width="0.5"/><text x="0" y="0" font-size="4.6" fill="#666" stroke="#666" stroke-width="0.13" font-weight="normal" text-anchor="end" font-family="Liberation Sans" transform="translate(105.17 536.2) rotate(-45)">JoystickNav</text><rect x="130.34" y="530.04" width="6.6" height="1.46" fill="#7aa040"/><rect x="141.54" y="473.10" width="6.8" height="58.40" fill="#963636"/><line x1="130.34" y1="495.00" x2="159.34" y2="495.00" stroke="#6a4f96" stroke-width="1.6"/><line x1="157.34" y1="507.41" x2="157.34" y2="530.17" stroke="#222" stroke-width="0.7"/><line x1="153.34" y1="507.41" x2="161.34" y2="507.41" stroke="#333" stroke-width="0.6"/><rect x="152.94" y="528.58" width="8.8" height="1.60" fill="#24484e" stroke="#111" stroke-width="0.5"/><line x1="153.34" y1="530.47" x2="161.34" y2="530.47" stroke="#333" stroke-width="0.5"/><text x="0" y="0" font-size="4.6" fill="#666" stroke="#666" stroke-width="0.13" font-weight="normal" text-anchor="end" font-family="Liberation Sans" transform="translate(148.84 536.2) rotate(-45)">JoystickServer</text><rect x="174.01" y="530.30" width="6.6" height="1.20" fill="#7aa040"/><rect x="185.20999999999998" y="512.88" width="6.8" height="18.62" fill="#963636"/><line x1="174.01" y1="495.00" x2="203.01" y2="495.00" stroke="#6a4f96" stroke-width="1.6"/><line x1="201.01" y1="521.28" x2="201.01" y2="530.90" stroke="#222" stroke-width="0.7"/><line x1="197.01" y1="521.28" x2="205.01" y2="521.28" stroke="#333" stroke-width="0.6"/><rect x="196.60999999999999" y="529.31" width="8.8" height="1.60" fill="#24484e" stroke="#111" stroke-width="0.5"/><line x1="197.01" y1="531.20" x2="205.01" y2="531.20" stroke="#333" stroke-width="0.5"/><text x="0" y="0" font-size="4.6" fill="#666" stroke="#666" stroke-width="0.13" font-weight="normal" text-anchor="end" font-family="Liberation Sans" transform="translate(192.51 536.2) rotate(-45)">Laser</text><rect x="217.68" y="530.30" width="6.6" height="1.20" fill="#7aa040"/><rect x="228.88" y="527.49" width="6.8" height="4.01" fill="#963636"/><line x1="217.68" y1="495.00" x2="246.68" y2="495.00" stroke="#6a4f96" stroke-width="1.6"/><line x1="244.68" y1="528.95" x2="244.68" y2="531.27" stroke="#222" stroke-width="0.7"/><line x1="240.68" y1="528.95" x2="248.68" y2="528.95" stroke="#333" stroke-width="0.6"/><rect x="240.28" y="529.67" width="8.8" height="1.60" fill="#24484e" stroke="#111" stroke-width="0.5"/><line x1="240.68" y1="531.57" x2="248.68" y2="531.57" stroke="#333" stroke-width="0.5"/><text x="0" y="0" font-size="4.6" fill="#666" stroke="#666" stroke-width="0.13" font-weight="normal" text-anchor="end" font-family="Liberation Sans" transform="translate(236.18 536.2) rotate(-45)">Mapper</text><rect x="261.35" y="530.30" width="6.6" height="1.20" fill="#7aa040"/><rect x="272.55" y="518.00" width="6.8" height="13.50" fill="#963636"/><line x1="261.35" y1="495.00" x2="290.35" y2="495.00" stroke="#6a4f96" stroke-width="1.6"/><line x1="288.35" y1="527.12" x2="288.35" y2="531.63" stroke="#222" stroke-width="0.7"/><line x1="284.35" y1="527.12" x2="292.35" y2="527.12" stroke="#333" stroke-width="0.6"/><rect x="283.95000000000005" y="530.40" width="8.8" height="1.60" fill="#24484e" stroke="#111" stroke-width="0.5"/><line x1="284.35" y1="531.93" x2="292.35" y2="531.93" stroke="#333" stroke-width="0.5"/><text x="0" y="0" font-size="4.6" fill="#666" stroke="#666" stroke-width="0.13" font-weight="normal" text-anchor="end" font-family="Liberation Sans" transform="translate(279.85 536.2) rotate(-45)">Odom</text><rect x="305.02" y="530.30" width="6.6" height="1.20" fill="#7aa040"/><rect x="316.21999999999997" y="526.02" width="6.8" height="5.47" fill="#963636"/><line x1="305.02" y1="495.00" x2="334.02" y2="495.00" stroke="#6a4f96" stroke-width="1.6"/><line x1="332.02" y1="527.49" x2="332.02" y2="530.90" stroke="#222" stroke-width="0.7"/><line x1="328.02" y1="527.49" x2="336.02" y2="527.49" stroke="#333" stroke-width="0.6"/><rect x="327.62" y="528.95" width="8.8" height="1.60" fill="#24484e" stroke="#111" stroke-width="0.5"/><line x1="328.02" y1="531.20" x2="336.02" y2="531.20" stroke="#333" stroke-width="0.5"/><text x="0" y="0" font-size="4.6" fill="#666" stroke="#666" stroke-width="0.13" font-weight="normal" text-anchor="end" font-family="Liberation Sans" transform="translate(323.52 536.2) rotate(-45)">Planner</text><rect x="348.69" y="530.30" width="6.6" height="1.20" fill="#7aa040"/><rect x="359.89" y="518.00" width="6.8" height="13.50" fill="#963636"/><line x1="348.69" y1="495.00" x2="377.69" y2="495.00" stroke="#6a4f96" stroke-width="1.6"/><line x1="375.69" y1="524.20" x2="375.69" y2="529.45" stroke="#222" stroke-width="0.7"/><line x1="371.69" y1="524.20" x2="379.69" y2="524.20" stroke="#333" stroke-width="0.6"/><rect x="371.29" y="526.02" width="8.8" height="2.92" fill="#24484e" stroke="#111" stroke-width="0.5"/><line x1="371.69" y1="529.75" x2="379.69" y2="529.75" stroke="#333" stroke-width="0.5"/><text x="0" y="0" font-size="4.6" fill="#666" stroke="#666" stroke-width="0.13" font-weight="normal" text-anchor="end" font-family="Liberation Sans" transform="translate(367.19 536.2) rotate(-45)">VelCmd</text></svg><div class="a" style="left:390.3px;top:318.5px;width:501.5px;height:211px;background:#ececec;border:0.8px solid #d2d2d2;border-radius:3px 3px 0 0;box-sizing:border-box"></div><div class="a" style="left:388.5px;top:529.5px;width:504px;height:3px;background:#e8e8e8"></div><div class="a" style="left:672px;top:319.3px;width:219px;height:13.8px;background:#e9e9e8;border-bottom:0.8px solid #d0d0d0"></div><svg style="left:671px;top:318.8px" width="20" height="15"><path d="M0 0.5 Q5 0.5 9 5 Q13 13.6 20 13.6 V15 H0Z" fill="#f6f6f5"/><path d="M0 0.5 Q5 0.5 9 5 Q13 13.6 20 13.6" fill="none" stroke="#cfcfcf" stroke-width="0.8"/></svg><div class="a" style="left:391px;top:319.3px;width:281px;height:14px;background:#f6f6f5;border-radius:3px 0 0 0"></div><svg style="left:393.3px;top:322.8px" width="7" height="6.3" viewBox="0 0 8 7"><path d="M0.5 6.5 L2 3 L4 4.5 L7.5 0.5 V6.5Z" fill="#d33"/><path d="M0.5 6.5 L2.5 4.5 L4.5 5.5 L7.5 3 V6.5Z" fill="#4a8a3a"/><path d="M0.5 4 L3 1.5 L5 3 L7.5 1" stroke="#3a5fb0" stroke-width="0.8" fill="none"/><path d="M0.5 0 V6.5 H8" stroke="#555" stroke-width="0.5" fill="none"/></svg><div class="t" style="left:401.9px;top:323.4px;font-size:7.35px;color:#555">System Distribution Charts - RT Histogram for Path FastReactiveNavigationLoop</div><svg style="left:668.7px;top:323.7px" width="5.3" height="5"><path d="M0.6 0.6 L4.7 4.4 M4.7 0.6 L0.6 4.4" stroke="#444" stroke-width="1" stroke-dasharray="1.1 0.5"/></svg><div class="a" style="left:875.6px;top:323.2px;width:5.5px;height:1.8px;background:#888;border-radius:1px"></div><div class="a" style="left:883px;top:323.3px;width:5.2px;height:5.2px;border:0.8px solid #333;border-top-width:1.6px;box-sizing:border-box"></div><div class="a" style="left:694.7px;top:336.8px;width:11.7px;height:12.4px;background:#e9e9e3;border:0.7px solid #c8c8c0;border-radius:2px;box-sizing:border-box"></div><div class="a" style="left:735.7px;top:336.8px;width:11.5px;height:12.4px;background:#e9e9e3;border:0.7px solid #c8c8c0;border-radius:2px;box-sizing:border-box"></div><div class="a" style="left:763px;top:336.8px;width:12px;height:12.4px;background:#e9e9e3;border:0.7px solid #c8c8c0;border-radius:2px;box-sizing:border-box"></div><svg style="left:0;top:0" width="900" height="360" viewBox="0 0 900 360"><path d="M697.5 339 V346.5 H704" stroke="#3a7a2a" stroke-width="0.7" fill="none"/><path d="M698 341 L701 343.5 L704 341.5" stroke="#c8a020" stroke-width="1.3" fill="none"/><circle cx="699" cy="345" r="1.2" fill="#2a8a3a"/><rect x="710.5" y="339" width="7.5" height="8" fill="#fff" stroke="#7a8ab0" stroke-width="0.6"/><path d="M712 341 H716.5 M712 343 H716.5 M712 345 H716.5" stroke="#5a7ab0" stroke-width="0.6"/><path d="M724.5 338.5 V347.5 H731" stroke="#3a8a3a" stroke-width="0.9" fill="none"/><circle cx="724.5" cy="339.5" r="0.9" fill="#2a6a2a"/><circle cx="731" cy="347.5" r="0.9" fill="#2a6a2a"/><rect x="738" y="338.5" width="7" height="9" fill="#f4f8ec" stroke="#7aa060" stroke-width="0.6"/><path d="M740 340.5 V345.5 M742 341 H744 M742 343 H744" stroke="#5a8a4a" stroke-width="0.6"/><rect x="752" y="342" width="6.5" height="3" fill="#ddd" stroke="#ccc" stroke-width="0.5"/><rect x="765.3" y="338.8" width="7.5" height="8.5" fill="#fff" stroke="#6a7aa0" stroke-width="0.6"/><rect x="766.5" y="340" width="5" height="2" fill="#e0b040"/><path d="M767 343.5 H771" stroke="#5a7ab0" stroke-width="0.6"/><rect x="779" y="339" width="5.5" height="5.5" fill="#f4c060" stroke="#888" stroke-width="0.5"/><rect x="781.3" y="341.8" width="5.5" height="5.5" fill="#5a90d0" stroke="#567" stroke-width="0.5"/><path d="M853 340 H858 M853 343 H856 M853 346 H858" stroke="#5a7ab0" stroke-width="0.7"/><path d="M856.5 339.5 L861 343 L856.5 346.5Z" fill="#e8b030"/><rect x="866" y="339.6" width="7" height="6.5" fill="#111"/><rect x="866" y="346.8" width="7" height="0.9" fill="#111"/><circle cx="869.5" cy="343" r="1.6" fill="#fff"/><circle cx="869.5" cy="343" r="0.8" fill="#111"/><rect x="867" y="338.8" width="5" height="1" fill="#111"/><path d="M881 347 V341.5 Q881 339.5 883 339.5 Q885.5 339.5 885.5 342 V347Z" fill="none" stroke="#ddd" stroke-width="0.8"/></svg><div class="a" style="left:790.5px;top:337px;width:57.7px;height:12.2px;background:#f6f6f6;border:0.7px solid #c6c6c6;border-radius:2px;box-sizing:border-box"></div><div class="t" style="left:793px;top:339.7px;font-size:7px;color:#555">Response Tim</div><div class="t" style="left:841.5px;top:338.2px;font-size:4.6px;color:#444;line-height:0.9">&#9652;<br>&#9662;</div><div class="a" style="left:849.5px;top:337px;width:0.7px;height:12px;background:#d8d8d8"></div><div class="a" style="left:391.5px;top:351.3px;width:499px;height:176px;background:#fff;border:0.8px solid #cacaca;box-sizing:border-box"></div><div class="a" style="left:392.8px;top:352.6px;width:496.5px;height:173.5px;border:0.8px solid #dadada;box-sizing:border-box"></div><svg style="left:0;top:0" width="900" height="549" viewBox="0 0 900 549"><text x="632.6" y="362.7" font-size="11.7" fill="#111" stroke="#111" stroke-width="0.13" font-weight="bold" text-anchor="middle" font-family="Liberation Sans" >RT Histogram for Path FastReactiveNavigationLoop</text><text x="631.5" y="370.8" font-size="7" fill="#111" stroke="#111" stroke-width="0.13" font-weight="bold" text-anchor="middle" font-family="Liberation Sans" >System Distribution, 50 of 50 gantts considered</text><line x1="417.5" y1="493.40" x2="420" y2="493.40" stroke="#666" stroke-width="0.5"/><text x="416.2" y="495.9" font-size="7.1" fill="#444" stroke="#444" stroke-width="0.13" font-weight="normal" text-anchor="end" font-family="Liberation Sans" >0</text><line x1="420" y1="484.07" x2="866" y2="484.07" stroke="#bbb" stroke-width="0.55" stroke-dasharray="1 1"/><line x1="417.5" y1="484.07" x2="420" y2="484.07" stroke="#666" stroke-width="0.5"/><text x="416.2" y="486.566" font-size="7.1" fill="#444" stroke="#444" stroke-width="0.13" font-weight="normal" text-anchor="end" font-family="Liberation Sans" >2</text><line x1="420" y1="474.73" x2="866" y2="474.73" stroke="#bbb" stroke-width="0.55" stroke-dasharray="1 1"/><line x1="417.5" y1="474.73" x2="420" y2="474.73" stroke="#666" stroke-width="0.5"/><text x="416.2" y="477.23199999999997" font-size="7.1" fill="#444" stroke="#444" stroke-width="0.13" font-weight="normal" text-anchor="end" font-family="Liberation Sans" >4</text><line x1="420" y1="465.40" x2="866" y2="465.40" stroke="#bbb" stroke-width="0.55" stroke-dasharray="1 1"/><line x1="417.5" y1="465.40" x2="420" y2="465.40" stroke="#666" stroke-width="0.5"/><text x="416.2" y="467.89799999999997" font-size="7.1" fill="#444" stroke="#444" stroke-width="0.13" font-weight="normal" text-anchor="end" font-family="Liberation Sans" >6</text><line x1="420" y1="456.06" x2="866" y2="456.06" stroke="#bbb" stroke-width="0.55" stroke-dasharray="1 1"/><line x1="417.5" y1="456.06" x2="420" y2="456.06" stroke="#666" stroke-width="0.5"/><text x="416.2" y="458.56399999999996" font-size="7.1" fill="#444" stroke="#444" stroke-width="0.13" font-weight="normal" text-anchor="end" font-family="Liberation Sans" >8</text><line x1="420" y1="446.73" x2="866" y2="446.73" stroke="#bbb" stroke-width="0.55" stroke-dasharray="1 1"/><line x1="417.5" y1="446.73" x2="420" y2="446.73" stroke="#666" stroke-width="0.5"/><text x="416.2" y="449.22999999999996" font-size="7.1" fill="#444" stroke="#444" stroke-width="0.13" font-weight="normal" text-anchor="end" font-family="Liberation Sans" >10</text><line x1="420" y1="437.40" x2="866" y2="437.40" stroke="#bbb" stroke-width="0.55" stroke-dasharray="1 1"/><line x1="417.5" y1="437.40" x2="420" y2="437.40" stroke="#666" stroke-width="0.5"/><text x="416.2" y="439.89599999999996" font-size="7.1" fill="#444" stroke="#444" stroke-width="0.13" font-weight="normal" text-anchor="end" font-family="Liberation Sans" >12</text><line x1="420" y1="428.06" x2="866" y2="428.06" stroke="#bbb" stroke-width="0.55" stroke-dasharray="1 1"/><line x1="417.5" y1="428.06" x2="420" y2="428.06" stroke="#666" stroke-width="0.5"/><text x="416.2" y="430.562" font-size="7.1" fill="#444" stroke="#444" stroke-width="0.13" font-weight="normal" text-anchor="end" font-family="Liberation Sans" >14</text><line x1="420" y1="418.73" x2="866" y2="418.73" stroke="#bbb" stroke-width="0.55" stroke-dasharray="1 1"/><line x1="417.5" y1="418.73" x2="420" y2="418.73" stroke="#666" stroke-width="0.5"/><text x="416.2" y="421.22799999999995" font-size="7.1" fill="#444" stroke="#444" stroke-width="0.13" font-weight="normal" text-anchor="end" font-family="Liberation Sans" >16</text><line x1="420" y1="409.39" x2="866" y2="409.39" stroke="#bbb" stroke-width="0.55" stroke-dasharray="1 1"/><line x1="417.5" y1="409.39" x2="420" y2="409.39" stroke="#666" stroke-width="0.5"/><text x="416.2" y="411.894" font-size="7.1" fill="#444" stroke="#444" stroke-width="0.13" font-weight="normal" text-anchor="end" font-family="Liberation Sans" >18</text><line x1="420" y1="400.06" x2="866" y2="400.06" stroke="#bbb" stroke-width="0.55" stroke-dasharray="1 1"/><line x1="417.5" y1="400.06" x2="420" y2="400.06" stroke="#666" stroke-width="0.5"/><text x="416.2" y="402.55999999999995" font-size="7.1" fill="#444" stroke="#444" stroke-width="0.13" font-weight="normal" text-anchor="end" font-family="Liberation Sans" >20</text><line x1="420" y1="390.73" x2="866" y2="390.73" stroke="#bbb" stroke-width="0.55" stroke-dasharray="1 1"/><line x1="417.5" y1="390.73" x2="420" y2="390.73" stroke="#666" stroke-width="0.5"/><text x="416.2" y="393.226" font-size="7.1" fill="#444" stroke="#444" stroke-width="0.13" font-weight="normal" text-anchor="end" font-family="Liberation Sans" >22</text><line x1="420" y1="381.39" x2="866" y2="381.39" stroke="#bbb" stroke-width="0.55" stroke-dasharray="1 1"/><line x1="417.5" y1="381.39" x2="420" y2="381.39" stroke="#666" stroke-width="0.5"/><text x="416.2" y="383.892" font-size="7.1" fill="#444" stroke="#444" stroke-width="0.13" font-weight="normal" text-anchor="end" font-family="Liberation Sans" >24</text><line x1="419.7" y1="377" x2="419.7" y2="493.9" stroke="#777" stroke-width="0.7"/><line x1="419.7" y1="493.4" x2="866" y2="493.4" stroke="#999" stroke-width="0.8"/><line x1="421.3" y1="377" x2="421.3" y2="493.4" stroke="#a8c88a" stroke-width="0.7"/><line x1="864" y1="377" x2="864" y2="493.4" stroke="#d0a0a0" stroke-width="0.7"/><text x="422.9" y="383.6" font-size="6.2" fill="#444" stroke="#444" stroke-width="0.13" font-weight="normal" text-anchor="start" font-family="Liberation Sans" >BCRT 5 ms</text><text x="862.2" y="383.6" font-size="6.3" fill="#444" stroke="#444" stroke-width="0.13" font-weight="normal" text-anchor="end" font-family="Liberation Sans" >WCRT 276 ms</text><text x="0" y="0" font-size="7.7" fill="#222" stroke="#222" stroke-width="0.13" font-weight="bold" text-anchor="middle" font-family="Liberation Sans" transform="translate(404.7 434) rotate(-90)">Number of times (Rt)</text><line x1="429.30" y1="493.4" x2="429.30" y2="495.2" stroke="#999" stroke-width="0.5"/><text x="429.3" y="501" font-size="6.6" fill="#444" stroke="#444" stroke-width="0.13" font-weight="normal" text-anchor="middle" font-family="Liberation Sans" >10</text><line x1="445.63" y1="493.4" x2="445.63" y2="495.2" stroke="#999" stroke-width="0.5"/><text x="445.63" y="501" font-size="6.6" fill="#444" stroke="#444" stroke-width="0.13" font-weight="normal" text-anchor="middle" font-family="Liberation Sans" >20</text><line x1="461.96" y1="493.4" x2="461.96" y2="495.2" stroke="#999" stroke-width="0.5"/><text x="461.96000000000004" y="501" font-size="6.6" fill="#444" stroke="#444" stroke-width="0.13" font-weight="normal" text-anchor="middle" font-family="Liberation Sans" >30</text><line x1="478.29" y1="493.4" x2="478.29" y2="495.2" stroke="#999" stroke-width="0.5"/><text x="478.29" y="501" font-size="6.6" fill="#444" stroke="#444" stroke-width="0.13" font-weight="normal" text-anchor="middle" font-family="Liberation Sans" >40</text><line x1="494.62" y1="493.4" x2="494.62" y2="495.2" stroke="#999" stroke-width="0.5"/><text x="494.62" y="501" font-size="6.6" fill="#444" stroke="#444" stroke-width="0.13" font-weight="normal" text-anchor="middle" font-family="Liberation Sans" >50</text><line x1="510.95" y1="493.4" x2="510.95" y2="495.2" stroke="#999" stroke-width="0.5"/><text x="510.95000000000005" y="501" font-size="6.6" fill="#444" stroke="#444" stroke-width="0.13" font-weight="normal" text-anchor="middle" font-family="Liberation Sans" >60</text><line x1="527.28" y1="493.4" x2="527.28" y2="495.2" stroke="#999" stroke-width="0.5"/><text x="527.28" y="501" font-size="6.6" fill="#444" stroke="#444" stroke-width="0.13" font-weight="normal" text-anchor="middle" font-family="Liberation Sans" >70</text><line x1="543.61" y1="493.4" x2="543.61" y2="495.2" stroke="#999" stroke-width="0.5"/><text x="543.61" y="501" font-size="6.6" fill="#444" stroke="#444" stroke-width="0.13" font-weight="normal" text-anchor="middle" font-family="Liberation Sans" >80</text><line x1="559.94" y1="493.4" x2="559.94" y2="495.2" stroke="#999" stroke-width="0.5"/><text x="559.94" y="501" font-size="6.6" fill="#444" stroke="#444" stroke-width="0.13" font-weight="normal" text-anchor="middle" font-family="Liberation Sans" >90</text><line x1="576.27" y1="493.4" x2="576.27" y2="495.2" stroke="#999" stroke-width="0.5"/><text x="576.27" y="501" font-size="6.6" fill="#444" stroke="#444" stroke-width="0.13" font-weight="normal" text-anchor="middle" font-family="Liberation Sans" >100</text><line x1="592.60" y1="493.4" x2="592.60" y2="495.2" stroke="#999" stroke-width="0.5"/><text x="592.6" y="501" font-size="6.6" fill="#444" stroke="#444" stroke-width="0.13" font-weight="normal" text-anchor="middle" font-family="Liberation Sans" >110</text><line x1="608.93" y1="493.4" x2="608.93" y2="495.2" stroke="#999" stroke-width="0.5"/><text x="608.9300000000001" y="501" font-size="6.6" fill="#444" stroke="#444" stroke-width="0.13" font-weight="normal" text-anchor="middle" font-family="Liberation Sans" >120</text><line x1="625.26" y1="493.4" x2="625.26" y2="495.2" stroke="#999" stroke-width="0.5"/><text x="625.26" y="501" font-size="6.6" fill="#444" stroke="#444" stroke-width="0.13" font-weight="normal" text-anchor="middle" font-family="Liberation Sans" >130</text><line x1="641.59" y1="493.4" x2="641.59" y2="495.2" stroke="#999" stroke-width="0.5"/><text x="641.59" y="501" font-size="6.6" fill="#444" stroke="#444" stroke-width="0.13" font-weight="normal" text-anchor="middle" font-family="Liberation Sans" >140</text><line x1="657.92" y1="493.4" x2="657.92" y2="495.2" stroke="#999" stroke-width="0.5"/><text x="657.9200000000001" y="501" font-size="6.6" fill="#444" stroke="#444" stroke-width="0.13" font-weight="normal" text-anchor="middle" font-family="Liberation Sans" >150</text><line x1="674.25" y1="493.4" x2="674.25" y2="495.2" stroke="#999" stroke-width="0.5"/><text x="674.25" y="501" font-size="6.6" fill="#444" stroke="#444" stroke-width="0.13" font-weight="normal" text-anchor="middle" font-family="Liberation Sans" >160</text><line x1="690.58" y1="493.4" x2="690.58" y2="495.2" stroke="#999" stroke-width="0.5"/><text x="690.5799999999999" y="501" font-size="6.6" fill="#444" stroke="#444" stroke-width="0.13" font-weight="normal" text-anchor="middle" font-family="Liberation Sans" >170</text><line x1="706.91" y1="493.4" x2="706.91" y2="495.2" stroke="#999" stroke-width="0.5"/><text x="706.9100000000001" y="501" font-size="6.6" fill="#444" stroke="#444" stroke-width="0.13" font-weight="normal" text-anchor="middle" font-family="Liberation Sans" >180</text><line x1="723.24" y1="493.4" x2="723.24" y2="495.2" stroke="#999" stroke-width="0.5"/><text x="723.24" y="501" font-size="6.6" fill="#444" stroke="#444" stroke-width="0.13" font-weight="normal" text-anchor="middle" font-family="Liberation Sans" >190</text><line x1="739.57" y1="493.4" x2="739.57" y2="495.2" stroke="#999" stroke-width="0.5"/><text x="739.5699999999999" y="501" font-size="6.6" fill="#444" stroke="#444" stroke-width="0.13" font-weight="normal" text-anchor="middle" font-family="Liberation Sans" >200</text><line x1="755.90" y1="493.4" x2="755.90" y2="495.2" stroke="#999" stroke-width="0.5"/><text x="755.9000000000001" y="501" font-size="6.6" fill="#444" stroke="#444" stroke-width="0.13" font-weight="normal" text-anchor="middle" font-family="Liberation Sans" >210</text><line x1="772.23" y1="493.4" x2="772.23" y2="495.2" stroke="#999" stroke-width="0.5"/><text x="772.23" y="501" font-size="6.6" fill="#444" stroke="#444" stroke-width="0.13" font-weight="normal" text-anchor="middle" font-family="Liberation Sans" >220</text><line x1="788.56" y1="493.4" x2="788.56" y2="495.2" stroke="#999" stroke-width="0.5"/><text x="788.56" y="501" font-size="6.6" fill="#444" stroke="#444" stroke-width="0.13" font-weight="normal" text-anchor="middle" font-family="Liberation Sans" >230</text><line x1="804.89" y1="493.4" x2="804.89" y2="495.2" stroke="#999" stroke-width="0.5"/><text x="804.89" y="501" font-size="6.6" fill="#444" stroke="#444" stroke-width="0.13" font-weight="normal" text-anchor="middle" font-family="Liberation Sans" >240</text><line x1="821.22" y1="493.4" x2="821.22" y2="495.2" stroke="#999" stroke-width="0.5"/><text x="821.22" y="501" font-size="6.6" fill="#444" stroke="#444" stroke-width="0.13" font-weight="normal" text-anchor="middle" font-family="Liberation Sans" >250</text><line x1="837.55" y1="493.4" x2="837.55" y2="495.2" stroke="#999" stroke-width="0.5"/><text x="837.55" y="501" font-size="6.6" fill="#444" stroke="#444" stroke-width="0.13" font-weight="normal" text-anchor="middle" font-family="Liberation Sans" >260</text><line x1="853.88" y1="493.4" x2="853.88" y2="495.2" stroke="#999" stroke-width="0.5"/><text x="853.88" y="501" font-size="6.6" fill="#444" stroke="#444" stroke-width="0.13" font-weight="normal" text-anchor="middle" font-family="Liberation Sans" >270</text><text x="641.7" y="510.2" font-size="7.75" fill="#222" stroke="#222" stroke-width="0.13" font-weight="bold" text-anchor="middle" font-family="Liberation Sans" >Rt [ms]</text><rect x="587" y="517.5" width="2.6" height="5" fill="#3d5e8e"/><text x="591.6" y="522.8" font-size="6.36" fill="#555" stroke="#555" stroke-width="0.13" font-weight="normal" text-anchor="start" font-family="Liberation Sans" >FastReactiveNavigationLoop</text><rect x="594.10" y="479.40" width="4.42" height="14.00" fill="#4d6b96" stroke="#6a86ad" stroke-width="0.3"/><rect x="598.52" y="460.73" width="4.42" height="32.67" fill="#4d6b96" stroke="#6a86ad" stroke-width="0.3"/><rect x="602.94" y="446.73" width="4.42" height="46.67" fill="#4d6b96" stroke="#6a86ad" stroke-width="0.3"/><rect x="607.36" y="423.39" width="4.42" height="70.00" fill="#4d6b96" stroke="#6a86ad" stroke-width="0.3"/><rect x="611.78" y="395.39" width="4.42" height="98.01" fill="#4d6b96" stroke="#6a86ad" stroke-width="0.3"/><rect x="616.20" y="470.06" width="4.42" height="23.34" fill="#4d6b96" stroke="#6a86ad" stroke-width="0.3"/><rect x="620.62" y="423.39" width="4.42" height="70.00" fill="#4d6b96" stroke="#6a86ad" stroke-width="0.3"/><rect x="625.04" y="428.06" width="4.42" height="65.34" fill="#4d6b96" stroke="#6a86ad" stroke-width="0.3"/><rect x="629.46" y="409.39" width="4.42" height="84.01" fill="#4d6b96" stroke="#6a86ad" stroke-width="0.3"/><rect x="633.88" y="428.06" width="4.42" height="65.34" fill="#4d6b96" stroke="#6a86ad" stroke-width="0.3"/><rect x="638.30" y="446.73" width="4.42" height="46.67" fill="#4d6b96" stroke="#6a86ad" stroke-width="0.3"/><rect x="642.72" y="423.39" width="4.42" height="70.00" fill="#4d6b96" stroke="#6a86ad" stroke-width="0.3"/><rect x="647.14" y="428.06" width="4.42" height="65.34" fill="#4d6b96" stroke="#6a86ad" stroke-width="0.3"/><rect x="651.56" y="428.06" width="4.42" height="65.34" fill="#4d6b96" stroke="#6a86ad" stroke-width="0.3"/><rect x="655.98" y="423.39" width="4.42" height="70.00" fill="#4d6b96" stroke="#6a86ad" stroke-width="0.3"/><rect x="660.40" y="451.40" width="4.42" height="42.00" fill="#4d6b96" stroke="#6a86ad" stroke-width="0.3"/><rect x="664.82" y="474.73" width="4.42" height="18.67" fill="#4d6b96" stroke="#6a86ad" stroke-width="0.3"/><rect x="669.24" y="428.06" width="4.42" height="65.34" fill="#4d6b96" stroke="#6a86ad" stroke-width="0.3"/><rect x="673.66" y="437.40" width="4.42" height="56.00" fill="#4d6b96" stroke="#6a86ad" stroke-width="0.3"/><rect x="678.08" y="423.39" width="4.42" height="70.00" fill="#4d6b96" stroke="#6a86ad" stroke-width="0.3"/><rect x="682.50" y="470.06" width="4.42" height="23.34" fill="#4d6b96" stroke="#6a86ad" stroke-width="0.3"/><rect x="686.92" y="474.73" width="4.42" height="18.67" fill="#4d6b96" stroke="#6a86ad" stroke-width="0.3"/><rect x="691.34" y="479.40" width="4.42" height="14.00" fill="#4d6b96" stroke="#6a86ad" stroke-width="0.3"/><rect x="695.76" y="474.73" width="4.42" height="18.67" fill="#4d6b96" stroke="#6a86ad" stroke-width="0.3"/><rect x="700.18" y="470.06" width="4.42" height="23.34" fill="#4d6b96" stroke="#6a86ad" stroke-width="0.3"/><rect x="704.60" y="451.40" width="4.42" height="42.00" fill="#4d6b96" stroke="#6a86ad" stroke-width="0.3"/><rect x="709.02" y="428.06" width="4.42" height="65.34" fill="#4d6b96" stroke="#6a86ad" stroke-width="0.3"/><rect x="713.44" y="437.40" width="4.42" height="56.00" fill="#4d6b96" stroke="#6a86ad" stroke-width="0.3"/><rect x="717.86" y="451.40" width="4.42" height="42.00" fill="#4d6b96" stroke="#6a86ad" stroke-width="0.3"/><rect x="722.28" y="432.73" width="4.42" height="60.67" fill="#4d6b96" stroke="#6a86ad" stroke-width="0.3"/><rect x="726.70" y="414.06" width="4.42" height="79.34" fill="#4d6b96" stroke="#6a86ad" stroke-width="0.3"/><rect x="731.12" y="442.06" width="4.42" height="51.34" fill="#4d6b96" stroke="#6a86ad" stroke-width="0.3"/><rect x="735.54" y="381.39" width="4.42" height="112.01" fill="#4d6b96" stroke="#6a86ad" stroke-width="0.3"/><rect x="739.96" y="404.73" width="4.42" height="88.67" fill="#4d6b96" stroke="#6a86ad" stroke-width="0.3"/><rect x="744.38" y="428.06" width="4.42" height="65.34" fill="#4d6b96" stroke="#6a86ad" stroke-width="0.3"/><rect x="748.80" y="456.06" width="4.42" height="37.34" fill="#4d6b96" stroke="#6a86ad" stroke-width="0.3"/><rect x="753.22" y="484.07" width="4.42" height="9.33" fill="#4d6b96" stroke="#6a86ad" stroke-width="0.3"/><rect x="757.64" y="488.73" width="4.42" height="4.67" fill="#4d6b96" stroke="#6a86ad" stroke-width="0.3"/></svg><div class="a" style="left:386px;top:533px;width:514px;height:16px;background:#fff"></div></body></html>
